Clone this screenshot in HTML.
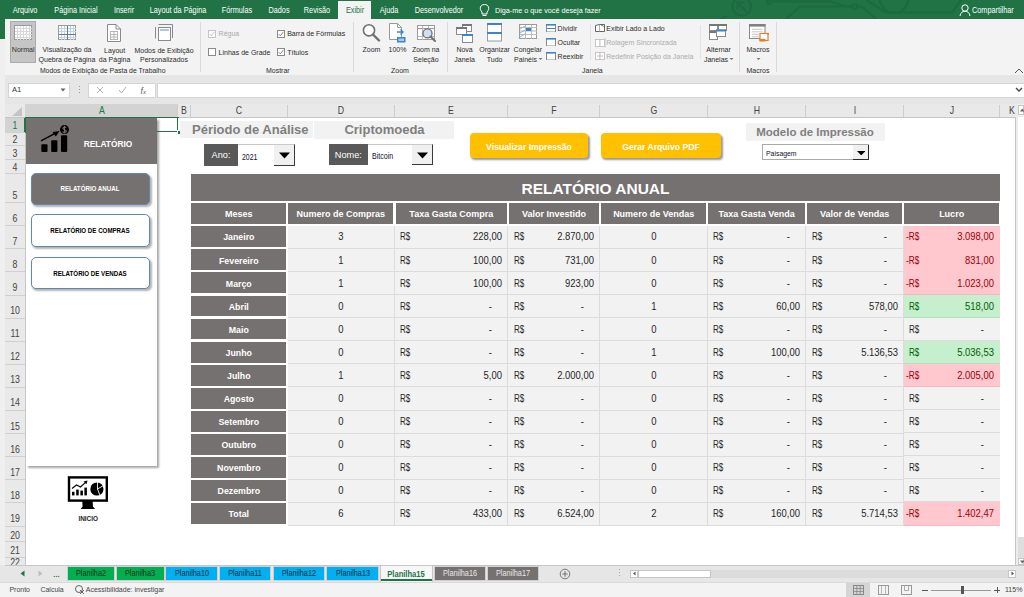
<!DOCTYPE html>
<html><head><meta charset="utf-8"><title>Excel</title>
<style>
html,body{margin:0;padding:0;}
body{width:1024px;height:597px;overflow:hidden;position:relative;background:#fff;font-family:"Liberation Sans", sans-serif;}
div{box-sizing:content-box;}
</style></head><body>
<div style="position:absolute;left:0px;top:0px;width:1024px;height:19px;background:#217346"></div>
<div style="position:absolute;left:0px;top:19px;width:5px;height:20px;background:#217346"></div>
<svg style="position:absolute;left:700px;top:0px" width="300" height="19" viewBox="0 0 300 19"><g stroke="#1d6940" stroke-width="2.2" fill="none" stroke-linecap="round"><circle cx="41.7" cy="6.5" r="9.3"/><path d="M46 11 L37.5 2.5 M37.5 2.5 L37.5 8 M37.5 2.5 L43 2.5"/><path d="M21 19 L26 16.5"/><path d="M70 1.3 L130.4 1.3 L145.6 6.5 L152.5 6.5"/><circle cx="69" cy="1.8" r="2"/><path d="M86 19 L100 6.5 L152.5 6.5"/><circle cx="155" cy="6.5" r="2.3"/><path d="M157.5 6.5 L162 6.5 L176 19"/><path d="M166.7 0 L185.5 12.3 L252 12.3 L261 0"/><path d="M180 -1 A14 14 0 0 0 208 -1"/></g></svg>
<div style="position:absolute;left:338px;top:1px;width:33px;height:18px;background:#f3f3f3"></div>
<div style="position:absolute;left:-174.55px;width:400px;text-align:center;top:5.88px;line-height:9.84px;font-size:8.2px;color:#fff;font-weight:400;white-space:nowrap;transform-origin:center center;transform:scaleX(0.89);">Arquivo</div>
<div style="position:absolute;left:-123.75px;width:400px;text-align:center;top:5.88px;line-height:9.84px;font-size:8.2px;color:#fff;font-weight:400;white-space:nowrap;transform-origin:center center;transform:scaleX(0.89);">Página Inicial</div>
<div style="position:absolute;left:-76.00px;width:400px;text-align:center;top:5.88px;line-height:9.84px;font-size:8.2px;color:#fff;font-weight:400;white-space:nowrap;transform-origin:center center;transform:scaleX(0.89);">Inserir</div>
<div style="position:absolute;left:-22.50px;width:400px;text-align:center;top:5.88px;line-height:9.84px;font-size:8.2px;color:#fff;font-weight:400;white-space:nowrap;transform-origin:center center;transform:scaleX(0.89);">Layout da Página</div>
<div style="position:absolute;left:36.50px;width:400px;text-align:center;top:5.88px;line-height:9.84px;font-size:8.2px;color:#fff;font-weight:400;white-space:nowrap;transform-origin:center center;transform:scaleX(0.89);">Fórmulas</div>
<div style="position:absolute;left:78.50px;width:400px;text-align:center;top:5.88px;line-height:9.84px;font-size:8.2px;color:#fff;font-weight:400;white-space:nowrap;transform-origin:center center;transform:scaleX(0.89);">Dados</div>
<div style="position:absolute;left:116.90px;width:400px;text-align:center;top:5.88px;line-height:9.84px;font-size:8.2px;color:#fff;font-weight:400;white-space:nowrap;transform-origin:center center;transform:scaleX(0.89);">Revisão</div>
<div style="position:absolute;left:189.05px;width:400px;text-align:center;top:5.88px;line-height:9.84px;font-size:8.2px;color:#fff;font-weight:400;white-space:nowrap;transform-origin:center center;transform:scaleX(0.89);">Ajuda</div>
<div style="position:absolute;left:238.95px;width:400px;text-align:center;top:5.88px;line-height:9.84px;font-size:8.2px;color:#fff;font-weight:400;white-space:nowrap;transform-origin:center center;transform:scaleX(0.89);">Desenvolvedor</div>
<div style="position:absolute;left:154.60px;width:400px;text-align:center;top:5.88px;line-height:9.84px;font-size:8.2px;color:#217346;font-weight:400;white-space:nowrap;transform-origin:center center;transform:scaleX(0.89);">Exibir</div>
<svg style="position:absolute;left:479px;top:3px" width="11" height="14" viewBox="0 0 11 14"><g stroke="#fff" stroke-width="1" fill="none"><path d="M3 9 C0 6 1 1.5 5.5 1.5 C10 1.5 11 6 8 9 L8 11 L3 11 Z"/><path d="M3.5 12.5 L7.5 12.5"/></g></svg>
<div style="position:absolute;left:495px;top:5.94px;line-height:9.72px;font-size:8.1px;color:#fff;font-weight:400;white-space:nowrap;transform-origin:left center;transform:scaleX(0.89);">Diga-me o que você deseja fazer</div>
<svg style="position:absolute;left:959px;top:3px" width="12" height="14" viewBox="0 0 12 14"><g stroke="#fff" stroke-width="1" fill="none"><circle cx="6" cy="5" r="3.2"/><path d="M1 13 C1.5 9.5 3.5 8.3 6 8.3 C8.5 8.3 10.5 9.5 11 13"/></g></svg>
<div style="position:absolute;left:972px;top:5.88px;line-height:9.84px;font-size:8.2px;color:#fff;font-weight:400;white-space:nowrap;transform-origin:left center;transform:scaleX(0.89);">Compartilhar</div>
<div style="position:absolute;left:5px;top:19px;width:1019px;height:56px;background:#f3f3f3"></div>
<div style="position:absolute;left:0px;top:39px;width:5px;height:526px;background:#efefef"></div>
<div style="position:absolute;left:10px;top:21px;width:26px;height:42px;background:#c5c5c5;border:1px solid #ababab;box-sizing:border-box"></div>
<svg style="position:absolute;left:14px;top:25px" width="18" height="15" viewBox="0 0 18 15"><rect x="0.5" y="0.5" width="17" height="14" fill="#fff" stroke="#9a9a9a"/><line x1="3.5" y1="1" x2="3.5" y2="15" stroke="#d8d8d8"/><line x1="6.5" y1="1" x2="6.5" y2="15" stroke="#d8d8d8"/><line x1="9.5" y1="1" x2="9.5" y2="15" stroke="#d8d8d8"/><line x1="12.5" y1="1" x2="12.5" y2="15" stroke="#d8d8d8"/><line x1="15.5" y1="1" x2="15.5" y2="15" stroke="#d8d8d8"/><line x1="1" y1="3.5" x2="18" y2="3.5" stroke="#d8d8d8"/><line x1="1" y1="6.5" x2="18" y2="6.5" stroke="#d8d8d8"/><line x1="1" y1="9.5" x2="18" y2="9.5" stroke="#d8d8d8"/><line x1="1" y1="12.5" x2="18" y2="12.5" stroke="#d8d8d8"/></svg>
<div style="position:absolute;left:-176.80px;width:400px;text-align:center;top:46.24px;line-height:8.52px;font-size:7.1px;color:#333;font-weight:400;white-space:nowrap;transform-origin:center center;">Normal</div>
<svg style="position:absolute;left:58px;top:25px" width="18" height="15" viewBox="0 0 18 15"><rect x="0.5" y="0.5" width="17" height="14" fill="#fff" stroke="#9a9a9a"/><line x1="3.5" y1="1" x2="3.5" y2="15" stroke="#bcd3ec"/><line x1="6.5" y1="1" x2="6.5" y2="15" stroke="#bcd3ec"/><line x1="9.5" y1="1" x2="9.5" y2="15" stroke="#bcd3ec"/><line x1="12.5" y1="1" x2="12.5" y2="15" stroke="#bcd3ec"/><line x1="15.5" y1="1" x2="15.5" y2="15" stroke="#bcd3ec"/><line x1="1" y1="3.5" x2="18" y2="3.5" stroke="#bcd3ec"/><line x1="1" y1="6.5" x2="18" y2="6.5" stroke="#bcd3ec"/><line x1="1" y1="9.5" x2="18" y2="9.5" stroke="#bcd3ec"/><line x1="1" y1="12.5" x2="18" y2="12.5" stroke="#bcd3ec"/><line x1="9.5" y1="1" x2="9.5" y2="15" stroke="#777"/><line x1="1" y1="9.5" x2="18" y2="9.5" stroke="#777"/></svg>
<div style="position:absolute;left:-133.00px;width:400px;text-align:center;top:46.30px;line-height:8.40px;font-size:7px;color:#2b2b2b;font-weight:400;white-space:nowrap;transform-origin:center center;">Visualização da</div>
<div style="position:absolute;left:-133.00px;width:400px;text-align:center;top:56.30px;line-height:8.40px;font-size:7px;color:#2b2b2b;font-weight:400;white-space:nowrap;transform-origin:center center;">Quebra de Página</div>
<svg style="position:absolute;left:107px;top:24px" width="14" height="18" viewBox="0 0 14 18"><path d="M0.5 0.5 L9 0.5 L13.5 5 L13.5 17.5 L0.5 17.5 Z" fill="#fff" stroke="#8a8a8a"/><path d="M9 0.5 L9 5 L13.5 5" fill="none" stroke="#8a8a8a"/><g stroke="#b5b5b5"><rect x="3.5" y="7.5" width="7" height="8" fill="none"/><line x1="7" y1="7.5" x2="7" y2="15.5"/><line x1="3.5" y1="10.5" x2="10.5" y2="10.5"/><line x1="3.5" y1="13" x2="10.5" y2="13"/></g></svg>
<div style="position:absolute;left:-85.40px;width:400px;text-align:center;top:46.50px;line-height:8.40px;font-size:7px;color:#2b2b2b;font-weight:400;white-space:nowrap;transform-origin:center center;">Layout</div>
<div style="position:absolute;left:-85.40px;width:400px;text-align:center;top:56.20px;line-height:8.40px;font-size:7px;color:#2b2b2b;font-weight:400;white-space:nowrap;transform-origin:center center;">da Página</div>
<svg style="position:absolute;left:155px;top:24px" width="19" height="17" viewBox="0 0 19 17"><g fill="none" stroke="#8a8a8a"><path d="M3.5 0.5 L17.5 0.5 L17.5 14"/><path d="M0.5 3 L0.5 14.5"/><rect x="3.5" y="3.5" width="12" height="13" fill="#fff"/></g><line x1="5" y1="6" x2="14" y2="6" stroke="#8fb3de" stroke-width="1.5"/></svg>
<div style="position:absolute;left:-36.00px;width:400px;text-align:center;top:46.50px;line-height:8.40px;font-size:7px;color:#2b2b2b;font-weight:400;white-space:nowrap;transform-origin:center center;">Modos de Exibição</div>
<div style="position:absolute;left:-36.00px;width:400px;text-align:center;top:56.20px;line-height:8.40px;font-size:7px;color:#2b2b2b;font-weight:400;white-space:nowrap;transform-origin:center center;">Personalizados</div>
<div style="position:absolute;left:-97.30px;width:400px;text-align:center;top:67.46px;line-height:8.28px;font-size:6.9px;color:#2b2b2b;font-weight:400;white-space:nowrap;transform-origin:center center;">Modos de Exibição de Pasta de Trabalho</div>
<div style="position:absolute;left:200px;top:22px;width:1px;height:50px;background:#dadada"></div>
<svg style="position:absolute;left:208px;top:29.5px" width="8" height="8" viewBox="0 0 8 8"><rect x="0.5" y="0.5" width="7" height="7" fill="#fff" stroke="#c4c4c4"/><path d="M1.6 4 L3.3 5.8 L6.5 1.8" fill="none" stroke="#c4c4c4" stroke-width="1"/></svg>
<div style="position:absolute;left:218.6px;top:30.10px;line-height:8.40px;font-size:7px;color:#a8a8a8;font-weight:400;white-space:nowrap;transform-origin:left center;">Régua</div>
<svg style="position:absolute;left:208px;top:48px" width="8" height="8" viewBox="0 0 8 8"><rect x="0.5" y="0.5" width="7" height="7" fill="#fff" stroke="#8a8a8a"/></svg>
<div style="position:absolute;left:218.6px;top:48.80px;line-height:8.40px;font-size:7px;color:#2b2b2b;font-weight:400;white-space:nowrap;transform-origin:left center;">Linhas de Grade</div>
<svg style="position:absolute;left:276.5px;top:29.5px" width="8" height="8" viewBox="0 0 8 8"><rect x="0.5" y="0.5" width="7" height="7" fill="#fff" stroke="#8a8a8a"/><path d="M1.6 4 L3.3 5.8 L6.5 1.8" fill="none" stroke="#8a8a8a" stroke-width="1"/></svg>
<div style="position:absolute;left:287.2px;top:30.10px;line-height:8.40px;font-size:7px;color:#2b2b2b;font-weight:400;white-space:nowrap;transform-origin:left center;">Barra de Fórmulas</div>
<svg style="position:absolute;left:276.5px;top:48px" width="8" height="8" viewBox="0 0 8 8"><rect x="0.5" y="0.5" width="7" height="7" fill="#fff" stroke="#8a8a8a"/><path d="M1.6 4 L3.3 5.8 L6.5 1.8" fill="none" stroke="#8a8a8a" stroke-width="1"/></svg>
<div style="position:absolute;left:287.2px;top:48.80px;line-height:8.40px;font-size:7px;color:#2b2b2b;font-weight:400;white-space:nowrap;transform-origin:left center;">Títulos</div>
<div style="position:absolute;left:77.80px;width:400px;text-align:center;top:67.10px;line-height:8.40px;font-size:7px;color:#2b2b2b;font-weight:400;white-space:nowrap;transform-origin:center center;">Mostrar</div>
<div style="position:absolute;left:353px;top:22px;width:1px;height:50px;background:#dadada"></div>
<svg style="position:absolute;left:361px;top:23px" width="20" height="19" viewBox="0 0 20 19"><circle cx="8" cy="7.3" r="5.6" fill="#fff" stroke="#707070" stroke-width="1.6"/><line x1="12" y1="11.5" x2="18" y2="17.5" stroke="#707070" stroke-width="2.4" stroke-linecap="round"/></svg>
<div style="position:absolute;left:171.50px;width:400px;text-align:center;top:46.00px;line-height:8.40px;font-size:7px;color:#2b2b2b;font-weight:400;white-space:nowrap;transform-origin:center center;">Zoom</div>
<svg style="position:absolute;left:389px;top:23px" width="18" height="20" viewBox="0 0 18 20"><path d="M0.5 0.5 L8.5 0.5 L12.5 4.5 L12.5 16.5 L0.5 16.5 Z" fill="#fff" stroke="#9a9a9a"/><path d="M8.5 0.5 L8.5 4.5 L12.5 4.5" fill="none" stroke="#9a9a9a"/><path d="M8 9 L14 9 M11.5 6.5 L14 9 L11.5 11.5" fill="none" stroke="#3d85c6" stroke-width="1.4"/><rect x="8" y="14" width="8.5" height="5.5" fill="#3d85c6"/><rect x="9.5" y="15.5" width="5.5" height="2.5" fill="#a9c8ea"/></svg>
<div style="position:absolute;left:197.50px;width:400px;text-align:center;top:46.00px;line-height:8.40px;font-size:7px;color:#2b2b2b;font-weight:400;white-space:nowrap;transform-origin:center center;">100%</div>
<svg style="position:absolute;left:417px;top:25px" width="20" height="18" viewBox="0 0 20 18"><rect x="0.5" y="0.5" width="17" height="14" fill="#fff" stroke="#9a9a9a"/><line x1="1" y1="3.5" x2="17" y2="3.5" stroke="#9a9a9a"/><line x1="1" y1="11.5" x2="17" y2="11.5" stroke="#bbb"/><line x1="5.5" y1="1" x2="5.5" y2="15" stroke="#bbb"/><line x1="11.5" y1="1" x2="11.5" y2="4" stroke="#bbb"/><circle cx="10.5" cy="8.4" r="4.5" fill="#cfe0f3" stroke="#707070" stroke-width="1.3"/><line x1="13.5" y1="11.5" x2="18" y2="16" stroke="#707070" stroke-width="2" stroke-linecap="round"/></svg>
<div style="position:absolute;left:225.70px;width:400px;text-align:center;top:46.00px;line-height:8.40px;font-size:7px;color:#2b2b2b;font-weight:400;white-space:nowrap;transform-origin:center center;">Zoom na</div>
<div style="position:absolute;left:226.00px;width:400px;text-align:center;top:56.10px;line-height:8.40px;font-size:7px;color:#2b2b2b;font-weight:400;white-space:nowrap;transform-origin:center center;">Seleção</div>
<div style="position:absolute;left:200.00px;width:400px;text-align:center;top:67.10px;line-height:8.40px;font-size:7px;color:#2b2b2b;font-weight:400;white-space:nowrap;transform-origin:center center;">Zoom</div>
<div style="position:absolute;left:447px;top:22px;width:1px;height:50px;background:#dadada"></div>
<svg style="position:absolute;left:455px;top:23px" width="20" height="20" viewBox="0 0 20 20"><rect x="7.5" y="1.5" width="9" height="7" fill="#fff" stroke="#8a8a8a"/><rect x="7" y="1" width="10" height="2" fill="#777"/><rect x="1.5" y="4.5" width="10" height="7" fill="#fff" stroke="#8a8a8a"/><rect x="1" y="4" width="11" height="2" fill="#777"/><rect x="7.5" y="11.5" width="10" height="8" fill="#fff" stroke="#8a8a8a"/><rect x="7" y="11" width="11" height="2" fill="#3d85c6"/></svg>
<div style="position:absolute;left:264.60px;width:400px;text-align:center;top:46.20px;line-height:8.40px;font-size:7px;color:#2b2b2b;font-weight:400;white-space:nowrap;transform-origin:center center;">Nova</div>
<div style="position:absolute;left:264.60px;width:400px;text-align:center;top:55.80px;line-height:8.40px;font-size:7px;color:#2b2b2b;font-weight:400;white-space:nowrap;transform-origin:center center;">Janela</div>
<svg style="position:absolute;left:487px;top:23px" width="16" height="19" viewBox="0 0 16 19"><rect x="0.5" y="0.5" width="14" height="17.5" fill="#fff" stroke="#9a9a9a"/><rect x="0" y="0" width="15" height="2" fill="#3d85c6"/><rect x="0" y="9" width="15" height="2" fill="#3d85c6"/></svg>
<div style="position:absolute;left:294.60px;width:400px;text-align:center;top:46.20px;line-height:8.40px;font-size:7px;color:#2b2b2b;font-weight:400;white-space:nowrap;transform-origin:center center;">Organizar</div>
<div style="position:absolute;left:294.60px;width:400px;text-align:center;top:55.80px;line-height:8.40px;font-size:7px;color:#2b2b2b;font-weight:400;white-space:nowrap;transform-origin:center center;">Tudo</div>
<svg style="position:absolute;left:519px;top:24px" width="18" height="16" viewBox="0 0 18 16"><rect x="0.5" y="0.5" width="17" height="14" fill="#fff" stroke="#9a9a9a"/><line x1="6.5" y1="1" x2="6.5" y2="15" stroke="#bbb"/><line x1="12.5" y1="1" x2="12.5" y2="15" stroke="#bbb"/><line x1="1" y1="3.5" x2="18" y2="3.5" stroke="#bbb"/><line x1="1" y1="7" x2="18" y2="7" stroke="#bbb"/><line x1="1" y1="10.5" x2="18" y2="10.5" stroke="#bbb"/><rect x="7" y="4" width="5" height="3" fill="#3d85c6"/><path d="M1 5 L6 2 M1 9 L6 6 M1 13 L6 10" stroke="#8fb3de"/></svg>
<div style="position:absolute;left:327.80px;width:400px;text-align:center;top:46.20px;line-height:8.40px;font-size:7px;color:#2b2b2b;font-weight:400;white-space:nowrap;transform-origin:center center;">Congelar</div>
<div style="position:absolute;left:325.50px;width:400px;text-align:center;top:55.80px;line-height:8.40px;font-size:7px;color:#2b2b2b;font-weight:400;white-space:nowrap;transform-origin:center center;">Painéis</div>
<svg style="position:absolute;left:538px;top:57px" width="5" height="4" viewBox="0 0 5 4"><path d="M0.5 1 L4.5 1 L2.5 3 Z" fill="#777"/></svg>
<svg style="position:absolute;left:546px;top:24.2px" width="10" height="8" viewBox="0 0 10 8"><rect x="0.5" y="0.5" width="9" height="7.5" fill="#fff" stroke="#8a8a8a"/><rect x="0" y="0" width="10" height="1.6" fill="#3d85c6"/><line x1="1" y1="4.5" x2="9" y2="4.5" stroke="#3d85c6"/></svg>
<div style="position:absolute;left:557.6px;top:25.10px;line-height:8.40px;font-size:7px;color:#2b2b2b;font-weight:400;white-space:nowrap;transform-origin:left center;">Dividir</div>
<svg style="position:absolute;left:546px;top:37.8px" width="10" height="8" viewBox="0 0 10 8"><rect x="0.5" y="0.5" width="9" height="7.5" fill="#fff" stroke="#8a8a8a"/><rect x="0" y="0" width="10" height="1.6" fill="#3d85c6"/></svg>
<div style="position:absolute;left:557.6px;top:38.70px;line-height:8.40px;font-size:7px;color:#2b2b2b;font-weight:400;white-space:nowrap;transform-origin:left center;">Ocultar</div>
<svg style="position:absolute;left:546px;top:52.2px" width="10" height="8" viewBox="0 0 10 8"><rect x="0.5" y="0.5" width="9" height="7.5" fill="#fff" stroke="#8a8a8a"/><rect x="0" y="0" width="10" height="1.6" fill="#3d85c6"/></svg>
<div style="position:absolute;left:557.6px;top:53.10px;line-height:8.40px;font-size:7px;color:#2b2b2b;font-weight:400;white-space:nowrap;transform-origin:left center;">Reexibir</div>
<svg style="position:absolute;left:595px;top:24px" width="10" height="8" viewBox="0 0 10 8"><g fill="#fff" stroke="#555" stroke-width="0.9"><path d="M0.5 1.5 L4.5 0.5 L4.5 7.5 L0.5 7.5 Z"/><path d="M4.5 0.5 L9.5 0.5 L9.5 7.5 L4.5 7.5"/><path d="M6 1.5 L8 1.5 L8.5 3" stroke="#888"/></g></svg>
<div style="position:absolute;left:606.3px;top:25.00px;line-height:8.40px;font-size:7px;color:#2b2b2b;font-weight:400;white-space:nowrap;transform-origin:left center;">Exibir Lado a Lado</div>
<svg style="position:absolute;left:595px;top:38px" width="11" height="10" viewBox="0 0 11 10"><g fill="#fff" stroke="#c0c0c0" stroke-width="0.9"><rect x="0.5" y="1.5" width="4.5" height="7"/><rect x="5" y="1.5" width="4.5" height="7"/><path d="M10 0 L10 9.5"/></g></svg>
<div style="position:absolute;left:606.3px;top:39.20px;line-height:8.40px;font-size:7px;color:#ababab;font-weight:400;white-space:nowrap;transform-origin:left center;">Rolagem Sincronizada</div>
<svg style="position:absolute;left:595px;top:52px" width="11" height="9" viewBox="0 0 11 9"><g fill="#fff" stroke="#c0c0c0" stroke-width="0.9"><rect x="0.5" y="0.5" width="4.5" height="7"/><rect x="5" y="0.5" width="4.5" height="7"/><path d="M2 4 L8 4" stroke="#d0b0b0"/></g></svg>
<div style="position:absolute;left:606.3px;top:53.10px;line-height:8.40px;font-size:7px;color:#ababab;font-weight:400;white-space:nowrap;transform-origin:left center;">Redefinir Posição da Janela</div>
<div style="position:absolute;left:590px;top:24px;width:1px;height:36px;background:#e2e2e2"></div>
<div style="position:absolute;left:700px;top:25px;width:1px;height:34px;background:#e2e2e2"></div>
<svg style="position:absolute;left:709px;top:24px" width="19" height="16" viewBox="0 0 19 16"><rect x="0.5" y="0.5" width="8" height="6" fill="#fff" stroke="#8a8a8a"/><rect x="0" y="0" width="9" height="2" fill="#777"/><rect x="9.5" y="0.5" width="8" height="6" fill="#fff" stroke="#8a8a8a"/><rect x="9" y="0" width="9" height="2" fill="#777"/><rect x="0.5" y="7.5" width="8" height="8" fill="#fff" stroke="#8a8a8a"/><rect x="0" y="7" width="9" height="2" fill="#777"/><rect x="7.5" y="6.0" width="9" height="6.5" fill="#fff" stroke="#8a8a8a"/><rect x="7" y="5.5" width="10" height="2" fill="#3d85c6"/></svg>
<div style="position:absolute;left:518.60px;width:400px;text-align:center;top:46.00px;line-height:8.40px;font-size:7px;color:#2b2b2b;font-weight:400;white-space:nowrap;transform-origin:center center;">Alternar</div>
<div style="position:absolute;left:516.00px;width:400px;text-align:center;top:56.10px;line-height:8.40px;font-size:7px;color:#2b2b2b;font-weight:400;white-space:nowrap;transform-origin:center center;">Janelas</div>
<svg style="position:absolute;left:729px;top:57px" width="5" height="4" viewBox="0 0 5 4"><path d="M0.5 1 L4.5 1 L2.5 3 Z" fill="#777"/></svg>
<div style="position:absolute;left:392.40px;width:400px;text-align:center;top:67.10px;line-height:8.40px;font-size:7px;color:#2b2b2b;font-weight:400;white-space:nowrap;transform-origin:center center;">Janela</div>
<div style="position:absolute;left:739px;top:22px;width:1px;height:50px;background:#dadada"></div>
<svg style="position:absolute;left:748.5px;top:24px" width="21" height="18" viewBox="0 0 21 18"><rect x="0.5" y="0.5" width="15.5" height="14" fill="#fff" stroke="#8a8a8a"/><rect x="0" y="0" width="16.5" height="2.6" fill="#808080"/><g stroke="#c0c0c0" stroke-width="0.9"><line x1="3" y1="5.3" x2="13.5" y2="5.3"/><line x1="3" y1="7.8" x2="13.5" y2="7.8"/><line x1="3" y1="10.3" x2="10" y2="10.3"/><line x1="3" y1="12.8" x2="10" y2="12.8"/></g><path d="M11 9.5 L19 9.5 L19 16.5 L11 16.5 Z" fill="#fff" stroke="#e67e22" stroke-width="1.2"/><rect x="10.5" y="15" width="6" height="2.5" fill="#e67e22"/><circle cx="19" cy="9.7" r="1" fill="#e67e22"/></svg>
<div style="position:absolute;left:558.00px;width:400px;text-align:center;top:46.00px;line-height:8.40px;font-size:7px;color:#2b2b2b;font-weight:400;white-space:nowrap;transform-origin:center center;">Macros</div>
<svg style="position:absolute;left:756px;top:57px" width="5" height="4" viewBox="0 0 5 4"><path d="M0.5 1 L4.5 1 L2.5 3 Z" fill="#777"/></svg>
<div style="position:absolute;left:558.00px;width:400px;text-align:center;top:67.10px;line-height:8.40px;font-size:7px;color:#2b2b2b;font-weight:400;white-space:nowrap;transform-origin:center center;">Macros</div>
<div style="position:absolute;left:776px;top:22px;width:1px;height:50px;background:#dadada"></div>
<svg style="position:absolute;left:1014px;top:68px" width="10" height="6" viewBox="0 0 10 6"><path d="M1 5 L5 1 L9 5" fill="none" stroke="#555" stroke-width="1"/></svg>
<div style="position:absolute;left:5px;top:75px;width:1019px;height:29px;background:#e6e6e6"></div>
<div style="position:absolute;left:8px;top:82.5px;width:62px;height:15px;background:#fff;border:1px solid #d4d4d4;box-sizing:border-box"></div>
<div style="position:absolute;left:12px;top:85.40px;line-height:9.60px;font-size:8px;color:#333;font-weight:400;white-space:nowrap;transform-origin:left center;transform:scaleX(0.95);">A1</div>
<svg style="position:absolute;left:60px;top:88px" width="6" height="4" viewBox="0 0 6 4"><path d="M0.5 0.5 L5.5 0.5 L3 3.5 Z" fill="#666"/></svg>
<svg style="position:absolute;left:78px;top:86px" width="3" height="9" viewBox="0 0 3 9"><g fill="#999"><rect x="1" y="0" width="1" height="1"/><rect x="1" y="3" width="1" height="1"/><rect x="1" y="6" width="1" height="1"/></g></svg>
<div style="position:absolute;left:88px;top:82.5px;width:67.5px;height:15px;background:#fff;border:1px solid #d4d4d4;box-sizing:border-box"></div>
<svg style="position:absolute;left:96px;top:86px" width="8" height="8" viewBox="0 0 8 8"><path d="M1 1 L7 7 M7 1 L1 7" stroke="#b0b0b0" stroke-width="1"/></svg>
<svg style="position:absolute;left:118px;top:86px" width="9" height="8" viewBox="0 0 9 8"><path d="M1 4 L3.5 7 L8 1" fill="none" stroke="#b0b0b0" stroke-width="1"/></svg>
<div style="position:absolute;left:140.5px;top:85.90px;line-height:10.20px;font-size:8.5px;color:#555;font-weight:400;white-space:nowrap;transform-origin:left center;"><i>f</i><span style='font-size:6px'><i>x</i></span></div>
<div style="position:absolute;left:157px;top:82.5px;width:867px;height:15px;background:#fff;border:1px solid #d4d4d4;border-right:none;box-sizing:border-box"></div>
<svg style="position:absolute;left:1015px;top:87px" width="8" height="6" viewBox="0 0 8 6"><path d="M1 1 L4 4 L7 1" fill="none" stroke="#444" stroke-width="1.3"/></svg>
<div style="position:absolute;left:5px;top:104px;width:1010px;height:13.5px;background:#e9e9e9"></div>
<div style="position:absolute;left:5px;top:117px;width:20px;height:448px;background:#e9e9e9"></div>
<svg style="position:absolute;left:12px;top:107px" width="11" height="9" viewBox="0 0 11 9"><path d="M10 0 L10 9 L0 9 Z" fill="#c4c4c4"/></svg>
<div style="position:absolute;left:25px;top:104px;width:153px;height:13px;background:#d3d3d3"></div>
<div style="position:absolute;left:-98.50px;width:400px;text-align:center;top:104.92px;line-height:12.36px;font-size:10.3px;color:#217346;font-weight:400;white-space:nowrap;transform-origin:center center;transform:scaleX(0.85);">A</div>
<div style="position:absolute;left:177.3px;top:105px;width:1px;height:12px;background:#cdcdcd"></div>
<div style="position:absolute;left:-15.75px;width:400px;text-align:center;top:104.92px;line-height:12.36px;font-size:10.3px;color:#444;font-weight:400;white-space:nowrap;transform-origin:center center;transform:scaleX(0.85);">B</div>
<div style="position:absolute;left:189.8px;top:105px;width:1px;height:12px;background:#cdcdcd"></div>
<div style="position:absolute;left:38.85px;width:400px;text-align:center;top:104.92px;line-height:12.36px;font-size:10.3px;color:#444;font-weight:400;white-space:nowrap;transform-origin:center center;transform:scaleX(0.85);">C</div>
<div style="position:absolute;left:286.5px;top:105px;width:1px;height:12px;background:#cdcdcd"></div>
<div style="position:absolute;left:140.85px;width:400px;text-align:center;top:104.92px;line-height:12.36px;font-size:10.3px;color:#444;font-weight:400;white-space:nowrap;transform-origin:center center;transform:scaleX(0.85);">D</div>
<div style="position:absolute;left:393.8px;top:105px;width:1px;height:12px;background:#cdcdcd"></div>
<div style="position:absolute;left:251.25px;width:400px;text-align:center;top:104.92px;line-height:12.36px;font-size:10.3px;color:#444;font-weight:400;white-space:nowrap;transform-origin:center center;transform:scaleX(0.85);">E</div>
<div style="position:absolute;left:507.3px;top:105px;width:1px;height:12px;background:#cdcdcd"></div>
<div style="position:absolute;left:354.00px;width:400px;text-align:center;top:104.92px;line-height:12.36px;font-size:10.3px;color:#444;font-weight:400;white-space:nowrap;transform-origin:center center;transform:scaleX(0.85);">F</div>
<div style="position:absolute;left:599.3px;top:105px;width:1px;height:12px;background:#cdcdcd"></div>
<div style="position:absolute;left:453.65px;width:400px;text-align:center;top:104.92px;line-height:12.36px;font-size:10.3px;color:#444;font-weight:400;white-space:nowrap;transform-origin:center center;transform:scaleX(0.85);">G</div>
<div style="position:absolute;left:706.5999999999999px;top:105px;width:1px;height:12px;background:#cdcdcd"></div>
<div style="position:absolute;left:556.65px;width:400px;text-align:center;top:104.92px;line-height:12.36px;font-size:10.3px;color:#444;font-weight:400;white-space:nowrap;transform-origin:center center;transform:scaleX(0.85);">H</div>
<div style="position:absolute;left:805.3px;top:105px;width:1px;height:12px;background:#cdcdcd"></div>
<div style="position:absolute;left:654.65px;width:400px;text-align:center;top:104.92px;line-height:12.36px;font-size:10.3px;color:#444;font-weight:400;white-space:nowrap;transform-origin:center center;transform:scaleX(0.85);">I</div>
<div style="position:absolute;left:902.5999999999999px;top:105px;width:1px;height:12px;background:#cdcdcd"></div>
<div style="position:absolute;left:751.65px;width:400px;text-align:center;top:104.92px;line-height:12.36px;font-size:10.3px;color:#444;font-weight:400;white-space:nowrap;transform-origin:center center;transform:scaleX(0.85);">J</div>
<div style="position:absolute;left:999.3px;top:105px;width:1px;height:12px;background:#cdcdcd"></div>
<div style="position:absolute;left:811.50px;width:400px;text-align:center;top:104.92px;line-height:12.36px;font-size:10.3px;color:#444;font-weight:400;white-space:nowrap;transform-origin:center center;transform:scaleX(0.85);">K</div>
<div style="position:absolute;left:5px;top:117px;width:1010px;height:0.8px;background:#c6c6c6"></div>
<div style="position:absolute;left:5px;top:117.5px;width:20px;height:14.5px;background:#d3d3d3"></div>
<div style="position:absolute;left:24px;top:117.5px;width:1.5px;height:14.5px;background:#217346"></div>
<div style="position:absolute;left:5px;top:131.6px;width:20px;height:0.8px;background:#d0d0d0"></div>
<div style="position:absolute;left:-185.20px;width:400px;text-align:center;top:120.12px;line-height:12.36px;font-size:10.3px;color:#217346;font-weight:400;white-space:nowrap;transform-origin:center center;transform:scaleX(0.85);">1</div>
<div style="position:absolute;left:5px;top:145.4px;width:20px;height:0.8px;background:#d0d0d0"></div>
<div style="position:absolute;left:-185.20px;width:400px;text-align:center;top:133.92px;line-height:12.36px;font-size:10.3px;color:#444;font-weight:400;white-space:nowrap;transform-origin:center center;transform:scaleX(0.85);">2</div>
<div style="position:absolute;left:5px;top:159.3px;width:20px;height:0.8px;background:#d0d0d0"></div>
<div style="position:absolute;left:-185.20px;width:400px;text-align:center;top:147.82px;line-height:12.36px;font-size:10.3px;color:#444;font-weight:400;white-space:nowrap;transform-origin:center center;transform:scaleX(0.85);">3</div>
<div style="position:absolute;left:5px;top:173.2px;width:20px;height:0.8px;background:#d0d0d0"></div>
<div style="position:absolute;left:-185.20px;width:400px;text-align:center;top:161.72px;line-height:12.36px;font-size:10.3px;color:#444;font-weight:400;white-space:nowrap;transform-origin:center center;transform:scaleX(0.85);">4</div>
<div style="position:absolute;left:5px;top:202px;width:20px;height:0.8px;background:#d0d0d0"></div>
<div style="position:absolute;left:-185.20px;width:400px;text-align:center;top:189.62px;line-height:12.36px;font-size:10.3px;color:#444;font-weight:400;white-space:nowrap;transform-origin:center center;transform:scaleX(0.85);">5</div>
<div style="position:absolute;left:5px;top:225.3px;width:20px;height:0.8px;background:#d0d0d0"></div>
<div style="position:absolute;left:-185.20px;width:400px;text-align:center;top:212.92px;line-height:12.36px;font-size:10.3px;color:#444;font-weight:400;white-space:nowrap;transform-origin:center center;transform:scaleX(0.85);">6</div>
<div style="position:absolute;left:5px;top:248.37px;width:20px;height:0.8px;background:#d0d0d0"></div>
<div style="position:absolute;left:-185.20px;width:400px;text-align:center;top:235.99px;line-height:12.36px;font-size:10.3px;color:#444;font-weight:400;white-space:nowrap;transform-origin:center center;transform:scaleX(0.85);">7</div>
<div style="position:absolute;left:5px;top:271.44px;width:20px;height:0.8px;background:#d0d0d0"></div>
<div style="position:absolute;left:-185.20px;width:400px;text-align:center;top:259.06px;line-height:12.36px;font-size:10.3px;color:#444;font-weight:400;white-space:nowrap;transform-origin:center center;transform:scaleX(0.85);">8</div>
<div style="position:absolute;left:5px;top:294.51px;width:20px;height:0.8px;background:#d0d0d0"></div>
<div style="position:absolute;left:-185.20px;width:400px;text-align:center;top:282.13px;line-height:12.36px;font-size:10.3px;color:#444;font-weight:400;white-space:nowrap;transform-origin:center center;transform:scaleX(0.85);">9</div>
<div style="position:absolute;left:5px;top:317.58000000000004px;width:20px;height:0.8px;background:#d0d0d0"></div>
<div style="position:absolute;left:-185.20px;width:400px;text-align:center;top:305.20px;line-height:12.36px;font-size:10.3px;color:#444;font-weight:400;white-space:nowrap;transform-origin:center center;transform:scaleX(0.85);">10</div>
<div style="position:absolute;left:5px;top:340.65px;width:20px;height:0.8px;background:#d0d0d0"></div>
<div style="position:absolute;left:-185.20px;width:400px;text-align:center;top:328.27px;line-height:12.36px;font-size:10.3px;color:#444;font-weight:400;white-space:nowrap;transform-origin:center center;transform:scaleX(0.85);">11</div>
<div style="position:absolute;left:5px;top:363.72px;width:20px;height:0.8px;background:#d0d0d0"></div>
<div style="position:absolute;left:-185.20px;width:400px;text-align:center;top:351.34px;line-height:12.36px;font-size:10.3px;color:#444;font-weight:400;white-space:nowrap;transform-origin:center center;transform:scaleX(0.85);">12</div>
<div style="position:absolute;left:5px;top:386.79px;width:20px;height:0.8px;background:#d0d0d0"></div>
<div style="position:absolute;left:-185.20px;width:400px;text-align:center;top:374.41px;line-height:12.36px;font-size:10.3px;color:#444;font-weight:400;white-space:nowrap;transform-origin:center center;transform:scaleX(0.85);">13</div>
<div style="position:absolute;left:5px;top:409.86px;width:20px;height:0.8px;background:#d0d0d0"></div>
<div style="position:absolute;left:-185.20px;width:400px;text-align:center;top:397.48px;line-height:12.36px;font-size:10.3px;color:#444;font-weight:400;white-space:nowrap;transform-origin:center center;transform:scaleX(0.85);">14</div>
<div style="position:absolute;left:5px;top:432.93px;width:20px;height:0.8px;background:#d0d0d0"></div>
<div style="position:absolute;left:-185.20px;width:400px;text-align:center;top:420.55px;line-height:12.36px;font-size:10.3px;color:#444;font-weight:400;white-space:nowrap;transform-origin:center center;transform:scaleX(0.85);">15</div>
<div style="position:absolute;left:5px;top:456.0px;width:20px;height:0.8px;background:#d0d0d0"></div>
<div style="position:absolute;left:-185.20px;width:400px;text-align:center;top:443.62px;line-height:12.36px;font-size:10.3px;color:#444;font-weight:400;white-space:nowrap;transform-origin:center center;transform:scaleX(0.85);">16</div>
<div style="position:absolute;left:5px;top:479.07000000000005px;width:20px;height:0.8px;background:#d0d0d0"></div>
<div style="position:absolute;left:-185.20px;width:400px;text-align:center;top:466.69px;line-height:12.36px;font-size:10.3px;color:#444;font-weight:400;white-space:nowrap;transform-origin:center center;transform:scaleX(0.85);">17</div>
<div style="position:absolute;left:5px;top:502.14000000000004px;width:20px;height:0.8px;background:#d0d0d0"></div>
<div style="position:absolute;left:-185.20px;width:400px;text-align:center;top:489.76px;line-height:12.36px;font-size:10.3px;color:#444;font-weight:400;white-space:nowrap;transform-origin:center center;transform:scaleX(0.85);">18</div>
<div style="position:absolute;left:5px;top:525.5px;width:20px;height:0.8px;background:#d0d0d0"></div>
<div style="position:absolute;left:-185.20px;width:400px;text-align:center;top:513.12px;line-height:12.36px;font-size:10.3px;color:#444;font-weight:400;white-space:nowrap;transform-origin:center center;transform:scaleX(0.85);">19</div>
<div style="position:absolute;left:5px;top:541px;width:20px;height:0.8px;background:#d0d0d0"></div>
<div style="position:absolute;left:-185.20px;width:400px;text-align:center;top:529.52px;line-height:12.36px;font-size:10.3px;color:#444;font-weight:400;white-space:nowrap;transform-origin:center center;transform:scaleX(0.85);">20</div>
<div style="position:absolute;left:5px;top:556.5px;width:20px;height:0.8px;background:#d0d0d0"></div>
<div style="position:absolute;left:-185.20px;width:400px;text-align:center;top:545.02px;line-height:12.36px;font-size:10.3px;color:#444;font-weight:400;white-space:nowrap;transform-origin:center center;transform:scaleX(0.85);">21</div>
<div style="position:absolute;left:5px;top:568px;width:20px;height:0.8px;background:#d0d0d0"></div>
<div style="position:absolute;left:-185.20px;width:400px;text-align:center;top:556.52px;line-height:12.36px;font-size:10.3px;color:#444;font-weight:400;white-space:nowrap;transform-origin:center center;transform:scaleX(0.85);">22</div>
<div style="position:absolute;left:24.5px;top:117px;width:0.8px;height:448px;background:#c6c6c6"></div>
<div style="position:absolute;left:25.5px;top:117.8px;width:989.5px;height:447.5px;background:#fff"></div>
<div style="position:absolute;left:1015px;top:104px;width:3px;height:461px;background:#ececec"></div>
<div style="position:absolute;left:1015px;top:117px;width:1.2px;height:448px;background:#c6c6c6"></div>
<div style="position:absolute;left:1018px;top:104px;width:6px;height:461px;background:#f0f0f0"></div>
<div style="position:absolute;left:1018px;top:117px;width:6px;height:420px;background:#fff"></div>
<div style="position:absolute;left:1018px;top:537px;width:6px;height:21px;background:#dedede"></div>
<div style="position:absolute;left:1018px;top:105px;width:6px;height:10px;background:#fff;border:1px solid #c6c6c6;box-sizing:border-box"></div>
<div style="position:absolute;left:1018px;top:558px;width:6px;height:7px;background:#fff;border:1px solid #c6c6c6;box-sizing:border-box"></div>
<svg style="position:absolute;left:1019.5px;top:108px" width="5" height="4" viewBox="0 0 5 4"><path d="M0 3.5 L4.5 3.5 L2.25 0.5 Z" fill="#666"/></svg>
<svg style="position:absolute;left:1019.5px;top:560px" width="5" height="4" viewBox="0 0 5 4"><path d="M0 0.5 L4.5 0.5 L2.25 3.5 Z" fill="#666"/></svg>
<div style="position:absolute;left:25.5px;top:117.5px;width:131.5px;height:348.3px;background:#fff;box-shadow:1.5px 1.5px 2px rgba(0,0,0,0.35)"></div>
<div style="position:absolute;left:25.5px;top:117.5px;width:131.5px;height:46px;background:#767171"></div>
<svg style="position:absolute;left:38px;top:122px" width="32" height="32" viewBox="0 0 32 32"><g fill="#000"><rect x="3.3" y="22.2" width="6.2" height="7.8" rx="1"/><rect x="13.2" y="18.2" width="6.2" height="11.8" rx="1"/><rect x="23" y="13.2" width="6.2" height="16.8" rx="1"/><circle cx="26.5" cy="7.6" r="4.5"/></g><path d="M28.3 5.6 C27.6 4.7 25 4.6 24.8 6.2 C24.6 7.8 28.4 7.3 28.3 9.1 C28.2 10.7 25.4 10.6 24.6 9.6 M26.5 3.8 L26.5 11.4" fill="none" stroke="#767171" stroke-width="1.1"/><path d="M3 18.9 L17.5 11.2" stroke="#000" stroke-width="1.5"/><path d="M21.5 9 L14.5 10 L17.8 14.6 Z" fill="#000"/></svg>
<div style="position:absolute;left:-91.80px;width:400px;text-align:center;top:138.30px;line-height:11.40px;font-size:9.5px;color:#fff;font-weight:700;white-space:nowrap;transform-origin:center center;transform:scaleX(0.88);">RELATÓRIO</div>
<div style="position:absolute;left:24.5px;top:117px;width:154.5px;height:1.4px;background:#217346"></div>
<div style="position:absolute;left:24.5px;top:117px;width:1.6px;height:15.5px;background:#217346"></div>
<div style="position:absolute;left:176.8px;top:117px;width:1.6px;height:15px;background:#217346"></div>
<div style="position:absolute;left:157px;top:131px;width:21px;height:1.4px;background:#217346"></div>
<div style="position:absolute;left:176.6px;top:130.3px;width:3px;height:3px;background:#217346;border:0.7px solid #fff;box-sizing:content-box"></div>
<div style="position:absolute;left:30.6px;top:172.9px;width:119.6px;height:31.8px;background:#767171;border:1.8px solid #6088b4;border-radius:5px;box-sizing:border-box;box-shadow:1.5px 2px 2px rgba(0,0,0,0.3)"></div>
<div style="position:absolute;left:-109.60px;width:400px;text-align:center;top:185.20px;line-height:8.40px;font-size:7px;color:#fff;font-weight:700;white-space:nowrap;transform-origin:center center;transform:scaleX(0.88);">RELATÓRIO ANUAL</div>
<div style="position:absolute;left:30.6px;top:214.4px;width:119.6px;height:32.4px;background:#fff;border:1.8px solid #6088b4;border-radius:5px;box-sizing:border-box;box-shadow:1.5px 2px 2px rgba(0,0,0,0.3)"></div>
<div style="position:absolute;left:-109.60px;width:400px;text-align:center;top:227.00px;line-height:8.40px;font-size:7px;color:#000;font-weight:700;white-space:nowrap;transform-origin:center center;transform:scaleX(0.88);">RELATÓRIO DE COMPRAS</div>
<div style="position:absolute;left:30.6px;top:256.7px;width:119.6px;height:32.8px;background:#fff;border:1.8px solid #6088b4;border-radius:5px;box-sizing:border-box;box-shadow:1.5px 2px 2px rgba(0,0,0,0.3)"></div>
<div style="position:absolute;left:-109.60px;width:400px;text-align:center;top:269.50px;line-height:8.40px;font-size:7px;color:#000;font-weight:700;white-space:nowrap;transform-origin:center center;transform:scaleX(0.88);">RELATÓRIO DE VENDAS</div>
<svg style="position:absolute;left:67px;top:475px" width="42" height="36" viewBox="0 0 42 36"><rect x="2" y="2.4" width="37.8" height="23.2" fill="#fff" stroke="#000" stroke-width="2.4"/><path d="M15.2 26 L25.6 26 L26 31.5 L28 34 L13.6 34 L15.6 31.5 Z" fill="#000"/><g fill="#000"><rect x="5" y="16.8" width="2.5" height="3.6"/><rect x="9.2" y="14.6" width="2.5" height="5.8"/><rect x="13.4" y="15.6" width="2.5" height="4.8"/><rect x="17.4" y="12.6" width="2.5" height="7.8"/></g><path d="M5 13.5 L9.5 10 L13.5 12 L18.5 7.3" fill="none" stroke="#000" stroke-width="1.1"/><path d="M16.5 6.6 L20.5 5.4 L19.5 9.2 Z" fill="#000"/><circle cx="29.9" cy="14" r="6.6" fill="#000"/><path d="M30.5 14 L30.5 7 M30.5 14 L36.5 10.5 M30.5 14 L33 20.5" stroke="#fff" stroke-width="0.9"/></svg>
<div style="position:absolute;left:-111.80px;width:400px;text-align:center;top:515.26px;line-height:7.68px;font-size:6.4px;color:#222;font-weight:700;white-space:nowrap;transform-origin:center center;">INICIO</div>
<div style="position:absolute;left:180px;top:121px;width:132.6px;height:17px;background:#f2f2f2"></div>
<div style="position:absolute;left:50.30px;width:400px;text-align:center;top:121.70px;line-height:15.60px;font-size:13px;color:#7f7f7f;font-weight:700;white-space:nowrap;transform-origin:center center;">Périodo de Análise</div>
<div style="position:absolute;left:314.4px;top:121px;width:140px;height:17.5px;background:#f2f2f2"></div>
<div style="position:absolute;left:184.50px;width:400px;text-align:center;top:121.90px;line-height:15.60px;font-size:13px;color:#7f7f7f;font-weight:700;white-space:nowrap;transform-origin:center center;">Criptomoeda</div>
<div style="position:absolute;left:204px;top:144px;width:34px;height:22px;background:#595959"></div>
<div style="position:absolute;left:21.00px;width:400px;text-align:center;top:150.08px;line-height:11.04px;font-size:9.2px;color:#fff;font-weight:400;white-space:nowrap;transform-origin:center center;">Ano:</div>
<div style="position:absolute;left:238px;top:144px;width:36px;height:22px;background:#fff;border-top:1px solid #c9c9c9"></div>
<div style="position:absolute;left:241.5px;top:151.74px;line-height:10.32px;font-size:8.6px;color:#101030;font-weight:400;white-space:nowrap;transform-origin:left center;transform:scaleX(0.8);">2021</div>
<div style="position:absolute;left:274px;top:144px;width:20.5px;height:22px;background:#f0f0f0;border-right:1.5px solid #3a3a3a;border-bottom:1.5px solid #3a3a3a;border-top:1px solid #c9c9c9;box-sizing:border-box"></div>
<svg style="position:absolute;left:279px;top:152.0px" width="11" height="7" viewBox="0 0 11 7"><path d="M0 0.5 L11 0.5 L5.5 6.5 Z" fill="#000"/></svg>
<div style="position:absolute;left:328.7px;top:144px;width:39.3px;height:21.19999999999999px;background:#595959"></div>
<div style="position:absolute;left:148.35px;width:400px;text-align:center;top:149.68px;line-height:11.04px;font-size:9.2px;color:#fff;font-weight:400;white-space:nowrap;transform-origin:center center;">Nome:</div>
<div style="position:absolute;left:368px;top:144px;width:44px;height:21.19999999999999px;background:#fff;border-top:1px solid #c9c9c9"></div>
<div style="position:absolute;left:371.5px;top:151.22px;line-height:10.56px;font-size:8.8px;color:#101030;font-weight:400;white-space:nowrap;transform-origin:left center;transform:scaleX(0.8);">Bitcoin</div>
<div style="position:absolute;left:412px;top:144px;width:20.5px;height:21.19999999999999px;background:#f0f0f0;border-right:1.5px solid #3a3a3a;border-bottom:1.5px solid #3a3a3a;border-top:1px solid #c9c9c9;box-sizing:border-box"></div>
<svg style="position:absolute;left:417px;top:151.6px" width="11" height="7" viewBox="0 0 11 7"><path d="M0 0.5 L11 0.5 L5.5 6.5 Z" fill="#000"/></svg>
<div style="position:absolute;left:469.6px;top:132.9px;width:118.10000000000002px;height:25.6px;background:#ffc000;border-radius:4px;box-shadow:1.5px 2px 2px rgba(0,0,0,0.4)"></div>
<div style="position:absolute;left:328.65px;width:400px;text-align:center;top:140.54px;line-height:11.52px;font-size:9.6px;color:#fff;font-weight:700;white-space:nowrap;transform-origin:center center;transform:scaleX(0.9);">Visualizar Impressão</div>
<div style="position:absolute;left:601.4px;top:132.9px;width:119.70000000000005px;height:25.6px;background:#ffc000;border-radius:4px;box-shadow:1.5px 2px 2px rgba(0,0,0,0.4)"></div>
<div style="position:absolute;left:461.25px;width:400px;text-align:center;top:140.54px;line-height:11.52px;font-size:9.6px;color:#fff;font-weight:700;white-space:nowrap;transform-origin:center center;transform:scaleX(0.9);">Gerar Arquivo PDF</div>
<div style="position:absolute;left:745.5px;top:122.8px;width:139.5px;height:17.8px;background:#f2f2f2"></div>
<div style="position:absolute;left:615.00px;width:400px;text-align:center;top:126.00px;line-height:13.80px;font-size:11.5px;color:#7f7f7f;font-weight:700;white-space:nowrap;transform-origin:center center;">Modelo de Impressão</div>
<div style="position:absolute;left:762px;top:144.3px;width:106.7px;height:16.2px;background:#fff;border:1px solid #a9a9a9;box-sizing:border-box"></div>
<div style="position:absolute;left:853.4px;top:144.8px;width:15.2px;height:15.4px;background:#f0f0f0;border-right:1.5px solid #2a2a2a;border-bottom:1.5px solid #2a2a2a;box-sizing:border-box"></div>
<svg style="position:absolute;left:856.8px;top:150.8px" width="8.4" height="4.5" viewBox="0 0 8.4 4.5"><path d="M0 0 L8.4 0 L4.2 4.4 Z" fill="#000"/></svg>
<div style="position:absolute;left:765.6px;top:148.60px;line-height:9.60px;font-size:8px;color:#101030;font-weight:400;white-space:nowrap;transform-origin:left center;transform:scaleX(0.86);">Paisagem</div>
<div style="position:absolute;left:191px;top:173.8px;width:809px;height:27px;background:#767171"></div>
<div style="position:absolute;left:395.50px;width:400px;text-align:center;top:179.50px;line-height:18.60px;font-size:15.5px;color:#fff;font-weight:700;white-space:nowrap;transform-origin:center center;">RELATÓRIO ANUAL</div>
<div style="position:absolute;left:191.0px;top:203px;width:95.19999999999999px;height:21px;background:#767171"></div>
<div style="position:absolute;left:38.85px;width:400px;text-align:center;top:208.80px;line-height:10.80px;font-size:9px;color:#fff;font-weight:700;white-space:nowrap;transform-origin:center center;">Meses</div>
<div style="position:absolute;left:288.2px;top:203px;width:105.30000000000001px;height:21px;background:#767171"></div>
<div style="position:absolute;left:140.85px;width:400px;text-align:center;top:208.80px;line-height:10.80px;font-size:9px;color:#fff;font-weight:700;white-space:nowrap;transform-origin:center center;">Numero de Compras</div>
<div style="position:absolute;left:395.5px;top:203px;width:111.5px;height:21px;background:#767171"></div>
<div style="position:absolute;left:251.25px;width:400px;text-align:center;top:208.80px;line-height:10.80px;font-size:9px;color:#fff;font-weight:700;white-space:nowrap;transform-origin:center center;">Taxa Gasta Compra</div>
<div style="position:absolute;left:509px;top:203px;width:90px;height:21px;background:#767171"></div>
<div style="position:absolute;left:354.00px;width:400px;text-align:center;top:208.80px;line-height:10.80px;font-size:9px;color:#fff;font-weight:700;white-space:nowrap;transform-origin:center center;">Valor Investido</div>
<div style="position:absolute;left:601px;top:203px;width:105.29999999999995px;height:21px;background:#767171"></div>
<div style="position:absolute;left:453.65px;width:400px;text-align:center;top:208.80px;line-height:10.80px;font-size:9px;color:#fff;font-weight:700;white-space:nowrap;transform-origin:center center;">Numero de Vendas</div>
<div style="position:absolute;left:708.3px;top:203px;width:96.70000000000005px;height:21px;background:#767171"></div>
<div style="position:absolute;left:556.65px;width:400px;text-align:center;top:208.80px;line-height:10.80px;font-size:9px;color:#fff;font-weight:700;white-space:nowrap;transform-origin:center center;">Taxa Gasta Venda</div>
<div style="position:absolute;left:807px;top:203px;width:95.29999999999995px;height:21px;background:#767171"></div>
<div style="position:absolute;left:654.65px;width:400px;text-align:center;top:208.80px;line-height:10.80px;font-size:9px;color:#fff;font-weight:700;white-space:nowrap;transform-origin:center center;">Valor de Vendas</div>
<div style="position:absolute;left:904.3px;top:203px;width:94.70000000000005px;height:21px;background:#767171"></div>
<div style="position:absolute;left:751.65px;width:400px;text-align:center;top:208.80px;line-height:10.80px;font-size:9px;color:#fff;font-weight:700;white-space:nowrap;transform-origin:center center;">Lucro</div>
<div style="position:absolute;left:288.2px;top:226px;width:615.1px;height:299.5px;background:#f2f2f2"></div>
<div style="position:absolute;left:191px;top:226.3px;width:95.3px;height:20.869999999999994px;background:#767171"></div>
<div style="position:absolute;left:38.80px;width:400px;text-align:center;top:232.46px;line-height:10.56px;font-size:8.8px;color:#fff;font-weight:700;white-space:nowrap;transform-origin:center center;">Janeiro</div>
<div style="position:absolute;left:288px;top:248.07px;width:615.3px;height:1px;background:#dcdcdc"></div>
<div style="position:absolute;left:140.85px;width:400px;text-align:center;top:230.44px;line-height:12.60px;font-size:10.5px;color:#262626;font-weight:400;white-space:nowrap;transform-origin:center center;transform:scaleX(0.9);">3</div>
<div style="position:absolute;left:453.65px;width:400px;text-align:center;top:230.44px;line-height:12.60px;font-size:10.5px;color:#262626;font-weight:400;white-space:nowrap;transform-origin:center center;transform:scaleX(0.9);">0</div>
<div style="position:absolute;left:400.0px;top:230.44px;line-height:12.60px;font-size:10.5px;color:#262626;font-weight:400;white-space:nowrap;transform-origin:left center;transform:scaleX(0.77);">R$</div>
<div style="position:absolute;left:102.20px;width:400px;text-align:right;top:230.44px;line-height:12.60px;font-size:10.5px;color:#262626;font-weight:400;white-space:nowrap;transform-origin:right center;transform:scaleX(0.9);">228,00</div>
<div style="position:absolute;left:513.5px;top:230.44px;line-height:12.60px;font-size:10.5px;color:#262626;font-weight:400;white-space:nowrap;transform-origin:left center;transform:scaleX(0.77);">R$</div>
<div style="position:absolute;left:194.20px;width:400px;text-align:right;top:230.44px;line-height:12.60px;font-size:10.5px;color:#262626;font-weight:400;white-space:nowrap;transform-origin:right center;transform:scaleX(0.9);">2.870,00</div>
<div style="position:absolute;left:712.8px;top:230.44px;line-height:12.60px;font-size:10.5px;color:#262626;font-weight:400;white-space:nowrap;transform-origin:left center;transform:scaleX(0.77);">R$</div>
<div style="position:absolute;left:389.70px;width:400px;text-align:right;top:230.44px;line-height:12.60px;font-size:10.5px;color:#262626;font-weight:400;white-space:nowrap;transform-origin:right center;transform:scaleX(0.9);">-</div>
<div style="position:absolute;left:811.5px;top:230.44px;line-height:12.60px;font-size:10.5px;color:#262626;font-weight:400;white-space:nowrap;transform-origin:left center;transform:scaleX(0.77);">R$</div>
<div style="position:absolute;left:487.00px;width:400px;text-align:right;top:230.44px;line-height:12.60px;font-size:10.5px;color:#262626;font-weight:400;white-space:nowrap;transform-origin:right center;transform:scaleX(0.9);">-</div>
<div style="position:absolute;left:903.3px;top:226px;width:96.7px;height:22.370000000000005px;background:#ffc7ce"></div>
<div style="position:absolute;left:903.3px;top:248.07px;width:96.7px;height:1px;background:#f4b8c0"></div>
<div style="position:absolute;left:906.3px;top:230.44px;line-height:12.60px;font-size:10.5px;color:#9c0006;font-weight:400;white-space:nowrap;transform-origin:left center;transform:scaleX(0.78);">-R$</div>
<div style="position:absolute;left:594.20px;width:400px;text-align:right;top:230.44px;line-height:12.60px;font-size:10.5px;color:#9c0006;font-weight:400;white-space:nowrap;transform-origin:right center;transform:scaleX(0.9);">3.098,00</div>
<div style="position:absolute;left:191px;top:249.37px;width:95.3px;height:20.869999999999994px;background:#767171"></div>
<div style="position:absolute;left:38.80px;width:400px;text-align:center;top:255.52px;line-height:10.56px;font-size:8.8px;color:#fff;font-weight:700;white-space:nowrap;transform-origin:center center;">Fevereiro</div>
<div style="position:absolute;left:288px;top:271.14px;width:615.3px;height:1px;background:#dcdcdc"></div>
<div style="position:absolute;left:140.85px;width:400px;text-align:center;top:253.50px;line-height:12.60px;font-size:10.5px;color:#262626;font-weight:400;white-space:nowrap;transform-origin:center center;transform:scaleX(0.9);">1</div>
<div style="position:absolute;left:453.65px;width:400px;text-align:center;top:253.50px;line-height:12.60px;font-size:10.5px;color:#262626;font-weight:400;white-space:nowrap;transform-origin:center center;transform:scaleX(0.9);">0</div>
<div style="position:absolute;left:400.0px;top:253.50px;line-height:12.60px;font-size:10.5px;color:#262626;font-weight:400;white-space:nowrap;transform-origin:left center;transform:scaleX(0.77);">R$</div>
<div style="position:absolute;left:102.20px;width:400px;text-align:right;top:253.50px;line-height:12.60px;font-size:10.5px;color:#262626;font-weight:400;white-space:nowrap;transform-origin:right center;transform:scaleX(0.9);">100,00</div>
<div style="position:absolute;left:513.5px;top:253.50px;line-height:12.60px;font-size:10.5px;color:#262626;font-weight:400;white-space:nowrap;transform-origin:left center;transform:scaleX(0.77);">R$</div>
<div style="position:absolute;left:194.20px;width:400px;text-align:right;top:253.50px;line-height:12.60px;font-size:10.5px;color:#262626;font-weight:400;white-space:nowrap;transform-origin:right center;transform:scaleX(0.9);">731,00</div>
<div style="position:absolute;left:712.8px;top:253.50px;line-height:12.60px;font-size:10.5px;color:#262626;font-weight:400;white-space:nowrap;transform-origin:left center;transform:scaleX(0.77);">R$</div>
<div style="position:absolute;left:389.70px;width:400px;text-align:right;top:253.50px;line-height:12.60px;font-size:10.5px;color:#262626;font-weight:400;white-space:nowrap;transform-origin:right center;transform:scaleX(0.9);">-</div>
<div style="position:absolute;left:811.5px;top:253.50px;line-height:12.60px;font-size:10.5px;color:#262626;font-weight:400;white-space:nowrap;transform-origin:left center;transform:scaleX(0.77);">R$</div>
<div style="position:absolute;left:487.00px;width:400px;text-align:right;top:253.50px;line-height:12.60px;font-size:10.5px;color:#262626;font-weight:400;white-space:nowrap;transform-origin:right center;transform:scaleX(0.9);">-</div>
<div style="position:absolute;left:903.3px;top:248.37px;width:96.7px;height:23.069999999999993px;background:#ffc7ce"></div>
<div style="position:absolute;left:903.3px;top:271.14px;width:96.7px;height:1px;background:#f4b8c0"></div>
<div style="position:absolute;left:906.3px;top:253.50px;line-height:12.60px;font-size:10.5px;color:#9c0006;font-weight:400;white-space:nowrap;transform-origin:left center;transform:scaleX(0.78);">-R$</div>
<div style="position:absolute;left:594.20px;width:400px;text-align:right;top:253.50px;line-height:12.60px;font-size:10.5px;color:#9c0006;font-weight:400;white-space:nowrap;transform-origin:right center;transform:scaleX(0.9);">831,00</div>
<div style="position:absolute;left:191px;top:272.44px;width:95.3px;height:20.869999999999994px;background:#767171"></div>
<div style="position:absolute;left:38.80px;width:400px;text-align:center;top:278.60px;line-height:10.56px;font-size:8.8px;color:#fff;font-weight:700;white-space:nowrap;transform-origin:center center;">Março</div>
<div style="position:absolute;left:288px;top:294.21px;width:615.3px;height:1px;background:#dcdcdc"></div>
<div style="position:absolute;left:140.85px;width:400px;text-align:center;top:276.58px;line-height:12.60px;font-size:10.5px;color:#262626;font-weight:400;white-space:nowrap;transform-origin:center center;transform:scaleX(0.9);">1</div>
<div style="position:absolute;left:453.65px;width:400px;text-align:center;top:276.58px;line-height:12.60px;font-size:10.5px;color:#262626;font-weight:400;white-space:nowrap;transform-origin:center center;transform:scaleX(0.9);">0</div>
<div style="position:absolute;left:400.0px;top:276.58px;line-height:12.60px;font-size:10.5px;color:#262626;font-weight:400;white-space:nowrap;transform-origin:left center;transform:scaleX(0.77);">R$</div>
<div style="position:absolute;left:102.20px;width:400px;text-align:right;top:276.58px;line-height:12.60px;font-size:10.5px;color:#262626;font-weight:400;white-space:nowrap;transform-origin:right center;transform:scaleX(0.9);">100,00</div>
<div style="position:absolute;left:513.5px;top:276.58px;line-height:12.60px;font-size:10.5px;color:#262626;font-weight:400;white-space:nowrap;transform-origin:left center;transform:scaleX(0.77);">R$</div>
<div style="position:absolute;left:194.20px;width:400px;text-align:right;top:276.58px;line-height:12.60px;font-size:10.5px;color:#262626;font-weight:400;white-space:nowrap;transform-origin:right center;transform:scaleX(0.9);">923,00</div>
<div style="position:absolute;left:712.8px;top:276.58px;line-height:12.60px;font-size:10.5px;color:#262626;font-weight:400;white-space:nowrap;transform-origin:left center;transform:scaleX(0.77);">R$</div>
<div style="position:absolute;left:389.70px;width:400px;text-align:right;top:276.58px;line-height:12.60px;font-size:10.5px;color:#262626;font-weight:400;white-space:nowrap;transform-origin:right center;transform:scaleX(0.9);">-</div>
<div style="position:absolute;left:811.5px;top:276.58px;line-height:12.60px;font-size:10.5px;color:#262626;font-weight:400;white-space:nowrap;transform-origin:left center;transform:scaleX(0.77);">R$</div>
<div style="position:absolute;left:487.00px;width:400px;text-align:right;top:276.58px;line-height:12.60px;font-size:10.5px;color:#262626;font-weight:400;white-space:nowrap;transform-origin:right center;transform:scaleX(0.9);">-</div>
<div style="position:absolute;left:903.3px;top:271.44px;width:96.7px;height:23.069999999999993px;background:#ffc7ce"></div>
<div style="position:absolute;left:903.3px;top:294.21px;width:96.7px;height:1px;background:#f4b8c0"></div>
<div style="position:absolute;left:906.3px;top:276.58px;line-height:12.60px;font-size:10.5px;color:#9c0006;font-weight:400;white-space:nowrap;transform-origin:left center;transform:scaleX(0.78);">-R$</div>
<div style="position:absolute;left:594.20px;width:400px;text-align:right;top:276.58px;line-height:12.60px;font-size:10.5px;color:#9c0006;font-weight:400;white-space:nowrap;transform-origin:right center;transform:scaleX(0.9);">1.023,00</div>
<div style="position:absolute;left:191px;top:295.51px;width:95.3px;height:20.87000000000005px;background:#767171"></div>
<div style="position:absolute;left:38.80px;width:400px;text-align:center;top:301.67px;line-height:10.56px;font-size:8.8px;color:#fff;font-weight:700;white-space:nowrap;transform-origin:center center;">Abril</div>
<div style="position:absolute;left:288px;top:317.28000000000003px;width:615.3px;height:1px;background:#dcdcdc"></div>
<div style="position:absolute;left:140.85px;width:400px;text-align:center;top:299.65px;line-height:12.60px;font-size:10.5px;color:#262626;font-weight:400;white-space:nowrap;transform-origin:center center;transform:scaleX(0.9);">0</div>
<div style="position:absolute;left:453.65px;width:400px;text-align:center;top:299.65px;line-height:12.60px;font-size:10.5px;color:#262626;font-weight:400;white-space:nowrap;transform-origin:center center;transform:scaleX(0.9);">1</div>
<div style="position:absolute;left:400.0px;top:299.65px;line-height:12.60px;font-size:10.5px;color:#262626;font-weight:400;white-space:nowrap;transform-origin:left center;transform:scaleX(0.77);">R$</div>
<div style="position:absolute;left:91.70px;width:400px;text-align:right;top:299.65px;line-height:12.60px;font-size:10.5px;color:#262626;font-weight:400;white-space:nowrap;transform-origin:right center;transform:scaleX(0.9);">-</div>
<div style="position:absolute;left:513.5px;top:299.65px;line-height:12.60px;font-size:10.5px;color:#262626;font-weight:400;white-space:nowrap;transform-origin:left center;transform:scaleX(0.77);">R$</div>
<div style="position:absolute;left:183.70px;width:400px;text-align:right;top:299.65px;line-height:12.60px;font-size:10.5px;color:#262626;font-weight:400;white-space:nowrap;transform-origin:right center;transform:scaleX(0.9);">-</div>
<div style="position:absolute;left:712.8px;top:299.65px;line-height:12.60px;font-size:10.5px;color:#262626;font-weight:400;white-space:nowrap;transform-origin:left center;transform:scaleX(0.77);">R$</div>
<div style="position:absolute;left:400.20px;width:400px;text-align:right;top:299.65px;line-height:12.60px;font-size:10.5px;color:#262626;font-weight:400;white-space:nowrap;transform-origin:right center;transform:scaleX(0.9);">60,00</div>
<div style="position:absolute;left:811.5px;top:299.65px;line-height:12.60px;font-size:10.5px;color:#262626;font-weight:400;white-space:nowrap;transform-origin:left center;transform:scaleX(0.77);">R$</div>
<div style="position:absolute;left:497.50px;width:400px;text-align:right;top:299.65px;line-height:12.60px;font-size:10.5px;color:#262626;font-weight:400;white-space:nowrap;transform-origin:right center;transform:scaleX(0.9);">578,00</div>
<div style="position:absolute;left:903.3px;top:294.51px;width:96.7px;height:23.07000000000005px;background:#c6efce"></div>
<div style="position:absolute;left:903.3px;top:317.28000000000003px;width:96.7px;height:1px;background:#b5e0be"></div>
<div style="position:absolute;left:908.8px;top:299.65px;line-height:12.60px;font-size:10.5px;color:#006100;font-weight:400;white-space:nowrap;transform-origin:left center;transform:scaleX(0.77);">R$</div>
<div style="position:absolute;left:594.20px;width:400px;text-align:right;top:299.65px;line-height:12.60px;font-size:10.5px;color:#006100;font-weight:400;white-space:nowrap;transform-origin:right center;transform:scaleX(0.9);">518,00</div>
<div style="position:absolute;left:191px;top:318.58000000000004px;width:95.3px;height:20.869999999999937px;background:#767171"></div>
<div style="position:absolute;left:38.80px;width:400px;text-align:center;top:324.74px;line-height:10.56px;font-size:8.8px;color:#fff;font-weight:700;white-space:nowrap;transform-origin:center center;">Maio</div>
<div style="position:absolute;left:288px;top:340.34999999999997px;width:615.3px;height:1px;background:#dcdcdc"></div>
<div style="position:absolute;left:140.85px;width:400px;text-align:center;top:322.72px;line-height:12.60px;font-size:10.5px;color:#262626;font-weight:400;white-space:nowrap;transform-origin:center center;transform:scaleX(0.9);">0</div>
<div style="position:absolute;left:453.65px;width:400px;text-align:center;top:322.72px;line-height:12.60px;font-size:10.5px;color:#262626;font-weight:400;white-space:nowrap;transform-origin:center center;transform:scaleX(0.9);">0</div>
<div style="position:absolute;left:400.0px;top:322.72px;line-height:12.60px;font-size:10.5px;color:#262626;font-weight:400;white-space:nowrap;transform-origin:left center;transform:scaleX(0.77);">R$</div>
<div style="position:absolute;left:91.70px;width:400px;text-align:right;top:322.72px;line-height:12.60px;font-size:10.5px;color:#262626;font-weight:400;white-space:nowrap;transform-origin:right center;transform:scaleX(0.9);">-</div>
<div style="position:absolute;left:513.5px;top:322.72px;line-height:12.60px;font-size:10.5px;color:#262626;font-weight:400;white-space:nowrap;transform-origin:left center;transform:scaleX(0.77);">R$</div>
<div style="position:absolute;left:183.70px;width:400px;text-align:right;top:322.72px;line-height:12.60px;font-size:10.5px;color:#262626;font-weight:400;white-space:nowrap;transform-origin:right center;transform:scaleX(0.9);">-</div>
<div style="position:absolute;left:712.8px;top:322.72px;line-height:12.60px;font-size:10.5px;color:#262626;font-weight:400;white-space:nowrap;transform-origin:left center;transform:scaleX(0.77);">R$</div>
<div style="position:absolute;left:389.70px;width:400px;text-align:right;top:322.72px;line-height:12.60px;font-size:10.5px;color:#262626;font-weight:400;white-space:nowrap;transform-origin:right center;transform:scaleX(0.9);">-</div>
<div style="position:absolute;left:811.5px;top:322.72px;line-height:12.60px;font-size:10.5px;color:#262626;font-weight:400;white-space:nowrap;transform-origin:left center;transform:scaleX(0.77);">R$</div>
<div style="position:absolute;left:487.00px;width:400px;text-align:right;top:322.72px;line-height:12.60px;font-size:10.5px;color:#262626;font-weight:400;white-space:nowrap;transform-origin:right center;transform:scaleX(0.9);">-</div>
<div style="position:absolute;left:903.3px;top:317.58000000000004px;width:96.7px;height:23.069999999999936px;background:#f2f2f2;border-bottom:1px solid #dcdcdc;box-sizing:border-box"></div>
<div style="position:absolute;left:908.8px;top:322.72px;line-height:12.60px;font-size:10.5px;color:#262626;font-weight:400;white-space:nowrap;transform-origin:left center;transform:scaleX(0.77);">R$</div>
<div style="position:absolute;left:583.70px;width:400px;text-align:right;top:322.72px;line-height:12.60px;font-size:10.5px;color:#262626;font-weight:400;white-space:nowrap;transform-origin:right center;transform:scaleX(0.9);">-</div>
<div style="position:absolute;left:191px;top:341.65px;width:95.3px;height:20.87000000000005px;background:#767171"></div>
<div style="position:absolute;left:38.80px;width:400px;text-align:center;top:347.81px;line-height:10.56px;font-size:8.8px;color:#fff;font-weight:700;white-space:nowrap;transform-origin:center center;">Junho</div>
<div style="position:absolute;left:288px;top:363.42px;width:615.3px;height:1px;background:#dcdcdc"></div>
<div style="position:absolute;left:140.85px;width:400px;text-align:center;top:345.79px;line-height:12.60px;font-size:10.5px;color:#262626;font-weight:400;white-space:nowrap;transform-origin:center center;transform:scaleX(0.9);">0</div>
<div style="position:absolute;left:453.65px;width:400px;text-align:center;top:345.79px;line-height:12.60px;font-size:10.5px;color:#262626;font-weight:400;white-space:nowrap;transform-origin:center center;transform:scaleX(0.9);">1</div>
<div style="position:absolute;left:400.0px;top:345.79px;line-height:12.60px;font-size:10.5px;color:#262626;font-weight:400;white-space:nowrap;transform-origin:left center;transform:scaleX(0.77);">R$</div>
<div style="position:absolute;left:91.70px;width:400px;text-align:right;top:345.79px;line-height:12.60px;font-size:10.5px;color:#262626;font-weight:400;white-space:nowrap;transform-origin:right center;transform:scaleX(0.9);">-</div>
<div style="position:absolute;left:513.5px;top:345.79px;line-height:12.60px;font-size:10.5px;color:#262626;font-weight:400;white-space:nowrap;transform-origin:left center;transform:scaleX(0.77);">R$</div>
<div style="position:absolute;left:183.70px;width:400px;text-align:right;top:345.79px;line-height:12.60px;font-size:10.5px;color:#262626;font-weight:400;white-space:nowrap;transform-origin:right center;transform:scaleX(0.9);">-</div>
<div style="position:absolute;left:712.8px;top:345.79px;line-height:12.60px;font-size:10.5px;color:#262626;font-weight:400;white-space:nowrap;transform-origin:left center;transform:scaleX(0.77);">R$</div>
<div style="position:absolute;left:400.20px;width:400px;text-align:right;top:345.79px;line-height:12.60px;font-size:10.5px;color:#262626;font-weight:400;white-space:nowrap;transform-origin:right center;transform:scaleX(0.9);">100,00</div>
<div style="position:absolute;left:811.5px;top:345.79px;line-height:12.60px;font-size:10.5px;color:#262626;font-weight:400;white-space:nowrap;transform-origin:left center;transform:scaleX(0.77);">R$</div>
<div style="position:absolute;left:497.50px;width:400px;text-align:right;top:345.79px;line-height:12.60px;font-size:10.5px;color:#262626;font-weight:400;white-space:nowrap;transform-origin:right center;transform:scaleX(0.9);">5.136,53</div>
<div style="position:absolute;left:903.3px;top:340.65px;width:96.7px;height:23.07000000000005px;background:#c6efce"></div>
<div style="position:absolute;left:903.3px;top:363.42px;width:96.7px;height:1px;background:#b5e0be"></div>
<div style="position:absolute;left:908.8px;top:345.79px;line-height:12.60px;font-size:10.5px;color:#006100;font-weight:400;white-space:nowrap;transform-origin:left center;transform:scaleX(0.77);">R$</div>
<div style="position:absolute;left:594.20px;width:400px;text-align:right;top:345.79px;line-height:12.60px;font-size:10.5px;color:#006100;font-weight:400;white-space:nowrap;transform-origin:right center;transform:scaleX(0.9);">5.036,53</div>
<div style="position:absolute;left:191px;top:364.72px;width:95.3px;height:20.869999999999994px;background:#767171"></div>
<div style="position:absolute;left:38.80px;width:400px;text-align:center;top:370.88px;line-height:10.56px;font-size:8.8px;color:#fff;font-weight:700;white-space:nowrap;transform-origin:center center;">Julho</div>
<div style="position:absolute;left:288px;top:386.49px;width:615.3px;height:1px;background:#dcdcdc"></div>
<div style="position:absolute;left:140.85px;width:400px;text-align:center;top:368.86px;line-height:12.60px;font-size:10.5px;color:#262626;font-weight:400;white-space:nowrap;transform-origin:center center;transform:scaleX(0.9);">1</div>
<div style="position:absolute;left:453.65px;width:400px;text-align:center;top:368.86px;line-height:12.60px;font-size:10.5px;color:#262626;font-weight:400;white-space:nowrap;transform-origin:center center;transform:scaleX(0.9);">0</div>
<div style="position:absolute;left:400.0px;top:368.86px;line-height:12.60px;font-size:10.5px;color:#262626;font-weight:400;white-space:nowrap;transform-origin:left center;transform:scaleX(0.77);">R$</div>
<div style="position:absolute;left:102.20px;width:400px;text-align:right;top:368.86px;line-height:12.60px;font-size:10.5px;color:#262626;font-weight:400;white-space:nowrap;transform-origin:right center;transform:scaleX(0.9);">5,00</div>
<div style="position:absolute;left:513.5px;top:368.86px;line-height:12.60px;font-size:10.5px;color:#262626;font-weight:400;white-space:nowrap;transform-origin:left center;transform:scaleX(0.77);">R$</div>
<div style="position:absolute;left:194.20px;width:400px;text-align:right;top:368.86px;line-height:12.60px;font-size:10.5px;color:#262626;font-weight:400;white-space:nowrap;transform-origin:right center;transform:scaleX(0.9);">2.000,00</div>
<div style="position:absolute;left:712.8px;top:368.86px;line-height:12.60px;font-size:10.5px;color:#262626;font-weight:400;white-space:nowrap;transform-origin:left center;transform:scaleX(0.77);">R$</div>
<div style="position:absolute;left:389.70px;width:400px;text-align:right;top:368.86px;line-height:12.60px;font-size:10.5px;color:#262626;font-weight:400;white-space:nowrap;transform-origin:right center;transform:scaleX(0.9);">-</div>
<div style="position:absolute;left:811.5px;top:368.86px;line-height:12.60px;font-size:10.5px;color:#262626;font-weight:400;white-space:nowrap;transform-origin:left center;transform:scaleX(0.77);">R$</div>
<div style="position:absolute;left:487.00px;width:400px;text-align:right;top:368.86px;line-height:12.60px;font-size:10.5px;color:#262626;font-weight:400;white-space:nowrap;transform-origin:right center;transform:scaleX(0.9);">-</div>
<div style="position:absolute;left:903.3px;top:363.72px;width:96.7px;height:23.069999999999993px;background:#ffc7ce"></div>
<div style="position:absolute;left:903.3px;top:386.49px;width:96.7px;height:1px;background:#f4b8c0"></div>
<div style="position:absolute;left:906.3px;top:368.86px;line-height:12.60px;font-size:10.5px;color:#9c0006;font-weight:400;white-space:nowrap;transform-origin:left center;transform:scaleX(0.78);">-R$</div>
<div style="position:absolute;left:594.20px;width:400px;text-align:right;top:368.86px;line-height:12.60px;font-size:10.5px;color:#9c0006;font-weight:400;white-space:nowrap;transform-origin:right center;transform:scaleX(0.9);">2.005,00</div>
<div style="position:absolute;left:191px;top:387.79px;width:95.3px;height:20.869999999999994px;background:#767171"></div>
<div style="position:absolute;left:38.80px;width:400px;text-align:center;top:393.95px;line-height:10.56px;font-size:8.8px;color:#fff;font-weight:700;white-space:nowrap;transform-origin:center center;">Agosto</div>
<div style="position:absolute;left:288px;top:409.56px;width:615.3px;height:1px;background:#dcdcdc"></div>
<div style="position:absolute;left:140.85px;width:400px;text-align:center;top:391.93px;line-height:12.60px;font-size:10.5px;color:#262626;font-weight:400;white-space:nowrap;transform-origin:center center;transform:scaleX(0.9);">0</div>
<div style="position:absolute;left:453.65px;width:400px;text-align:center;top:391.93px;line-height:12.60px;font-size:10.5px;color:#262626;font-weight:400;white-space:nowrap;transform-origin:center center;transform:scaleX(0.9);">0</div>
<div style="position:absolute;left:400.0px;top:391.93px;line-height:12.60px;font-size:10.5px;color:#262626;font-weight:400;white-space:nowrap;transform-origin:left center;transform:scaleX(0.77);">R$</div>
<div style="position:absolute;left:91.70px;width:400px;text-align:right;top:391.93px;line-height:12.60px;font-size:10.5px;color:#262626;font-weight:400;white-space:nowrap;transform-origin:right center;transform:scaleX(0.9);">-</div>
<div style="position:absolute;left:513.5px;top:391.93px;line-height:12.60px;font-size:10.5px;color:#262626;font-weight:400;white-space:nowrap;transform-origin:left center;transform:scaleX(0.77);">R$</div>
<div style="position:absolute;left:183.70px;width:400px;text-align:right;top:391.93px;line-height:12.60px;font-size:10.5px;color:#262626;font-weight:400;white-space:nowrap;transform-origin:right center;transform:scaleX(0.9);">-</div>
<div style="position:absolute;left:712.8px;top:391.93px;line-height:12.60px;font-size:10.5px;color:#262626;font-weight:400;white-space:nowrap;transform-origin:left center;transform:scaleX(0.77);">R$</div>
<div style="position:absolute;left:389.70px;width:400px;text-align:right;top:391.93px;line-height:12.60px;font-size:10.5px;color:#262626;font-weight:400;white-space:nowrap;transform-origin:right center;transform:scaleX(0.9);">-</div>
<div style="position:absolute;left:811.5px;top:391.93px;line-height:12.60px;font-size:10.5px;color:#262626;font-weight:400;white-space:nowrap;transform-origin:left center;transform:scaleX(0.77);">R$</div>
<div style="position:absolute;left:487.00px;width:400px;text-align:right;top:391.93px;line-height:12.60px;font-size:10.5px;color:#262626;font-weight:400;white-space:nowrap;transform-origin:right center;transform:scaleX(0.9);">-</div>
<div style="position:absolute;left:903.3px;top:386.79px;width:96.7px;height:23.069999999999993px;background:#f2f2f2;border-bottom:1px solid #dcdcdc;box-sizing:border-box"></div>
<div style="position:absolute;left:908.8px;top:391.93px;line-height:12.60px;font-size:10.5px;color:#262626;font-weight:400;white-space:nowrap;transform-origin:left center;transform:scaleX(0.77);">R$</div>
<div style="position:absolute;left:583.70px;width:400px;text-align:right;top:391.93px;line-height:12.60px;font-size:10.5px;color:#262626;font-weight:400;white-space:nowrap;transform-origin:right center;transform:scaleX(0.9);">-</div>
<div style="position:absolute;left:191px;top:410.86px;width:95.3px;height:20.869999999999994px;background:#767171"></div>
<div style="position:absolute;left:38.80px;width:400px;text-align:center;top:417.02px;line-height:10.56px;font-size:8.8px;color:#fff;font-weight:700;white-space:nowrap;transform-origin:center center;">Setembro</div>
<div style="position:absolute;left:288px;top:432.63px;width:615.3px;height:1px;background:#dcdcdc"></div>
<div style="position:absolute;left:140.85px;width:400px;text-align:center;top:415.00px;line-height:12.60px;font-size:10.5px;color:#262626;font-weight:400;white-space:nowrap;transform-origin:center center;transform:scaleX(0.9);">0</div>
<div style="position:absolute;left:453.65px;width:400px;text-align:center;top:415.00px;line-height:12.60px;font-size:10.5px;color:#262626;font-weight:400;white-space:nowrap;transform-origin:center center;transform:scaleX(0.9);">0</div>
<div style="position:absolute;left:400.0px;top:415.00px;line-height:12.60px;font-size:10.5px;color:#262626;font-weight:400;white-space:nowrap;transform-origin:left center;transform:scaleX(0.77);">R$</div>
<div style="position:absolute;left:91.70px;width:400px;text-align:right;top:415.00px;line-height:12.60px;font-size:10.5px;color:#262626;font-weight:400;white-space:nowrap;transform-origin:right center;transform:scaleX(0.9);">-</div>
<div style="position:absolute;left:513.5px;top:415.00px;line-height:12.60px;font-size:10.5px;color:#262626;font-weight:400;white-space:nowrap;transform-origin:left center;transform:scaleX(0.77);">R$</div>
<div style="position:absolute;left:183.70px;width:400px;text-align:right;top:415.00px;line-height:12.60px;font-size:10.5px;color:#262626;font-weight:400;white-space:nowrap;transform-origin:right center;transform:scaleX(0.9);">-</div>
<div style="position:absolute;left:712.8px;top:415.00px;line-height:12.60px;font-size:10.5px;color:#262626;font-weight:400;white-space:nowrap;transform-origin:left center;transform:scaleX(0.77);">R$</div>
<div style="position:absolute;left:389.70px;width:400px;text-align:right;top:415.00px;line-height:12.60px;font-size:10.5px;color:#262626;font-weight:400;white-space:nowrap;transform-origin:right center;transform:scaleX(0.9);">-</div>
<div style="position:absolute;left:811.5px;top:415.00px;line-height:12.60px;font-size:10.5px;color:#262626;font-weight:400;white-space:nowrap;transform-origin:left center;transform:scaleX(0.77);">R$</div>
<div style="position:absolute;left:487.00px;width:400px;text-align:right;top:415.00px;line-height:12.60px;font-size:10.5px;color:#262626;font-weight:400;white-space:nowrap;transform-origin:right center;transform:scaleX(0.9);">-</div>
<div style="position:absolute;left:903.3px;top:409.86px;width:96.7px;height:23.069999999999993px;background:#f2f2f2;border-bottom:1px solid #dcdcdc;box-sizing:border-box"></div>
<div style="position:absolute;left:908.8px;top:415.00px;line-height:12.60px;font-size:10.5px;color:#262626;font-weight:400;white-space:nowrap;transform-origin:left center;transform:scaleX(0.77);">R$</div>
<div style="position:absolute;left:583.70px;width:400px;text-align:right;top:415.00px;line-height:12.60px;font-size:10.5px;color:#262626;font-weight:400;white-space:nowrap;transform-origin:right center;transform:scaleX(0.9);">-</div>
<div style="position:absolute;left:191px;top:433.93px;width:95.3px;height:20.869999999999994px;background:#767171"></div>
<div style="position:absolute;left:38.80px;width:400px;text-align:center;top:440.09px;line-height:10.56px;font-size:8.8px;color:#fff;font-weight:700;white-space:nowrap;transform-origin:center center;">Outubro</div>
<div style="position:absolute;left:288px;top:455.7px;width:615.3px;height:1px;background:#dcdcdc"></div>
<div style="position:absolute;left:140.85px;width:400px;text-align:center;top:438.07px;line-height:12.60px;font-size:10.5px;color:#262626;font-weight:400;white-space:nowrap;transform-origin:center center;transform:scaleX(0.9);">0</div>
<div style="position:absolute;left:453.65px;width:400px;text-align:center;top:438.07px;line-height:12.60px;font-size:10.5px;color:#262626;font-weight:400;white-space:nowrap;transform-origin:center center;transform:scaleX(0.9);">0</div>
<div style="position:absolute;left:400.0px;top:438.07px;line-height:12.60px;font-size:10.5px;color:#262626;font-weight:400;white-space:nowrap;transform-origin:left center;transform:scaleX(0.77);">R$</div>
<div style="position:absolute;left:91.70px;width:400px;text-align:right;top:438.07px;line-height:12.60px;font-size:10.5px;color:#262626;font-weight:400;white-space:nowrap;transform-origin:right center;transform:scaleX(0.9);">-</div>
<div style="position:absolute;left:513.5px;top:438.07px;line-height:12.60px;font-size:10.5px;color:#262626;font-weight:400;white-space:nowrap;transform-origin:left center;transform:scaleX(0.77);">R$</div>
<div style="position:absolute;left:183.70px;width:400px;text-align:right;top:438.07px;line-height:12.60px;font-size:10.5px;color:#262626;font-weight:400;white-space:nowrap;transform-origin:right center;transform:scaleX(0.9);">-</div>
<div style="position:absolute;left:712.8px;top:438.07px;line-height:12.60px;font-size:10.5px;color:#262626;font-weight:400;white-space:nowrap;transform-origin:left center;transform:scaleX(0.77);">R$</div>
<div style="position:absolute;left:389.70px;width:400px;text-align:right;top:438.07px;line-height:12.60px;font-size:10.5px;color:#262626;font-weight:400;white-space:nowrap;transform-origin:right center;transform:scaleX(0.9);">-</div>
<div style="position:absolute;left:811.5px;top:438.07px;line-height:12.60px;font-size:10.5px;color:#262626;font-weight:400;white-space:nowrap;transform-origin:left center;transform:scaleX(0.77);">R$</div>
<div style="position:absolute;left:487.00px;width:400px;text-align:right;top:438.07px;line-height:12.60px;font-size:10.5px;color:#262626;font-weight:400;white-space:nowrap;transform-origin:right center;transform:scaleX(0.9);">-</div>
<div style="position:absolute;left:903.3px;top:432.93px;width:96.7px;height:23.069999999999993px;background:#f2f2f2;border-bottom:1px solid #dcdcdc;box-sizing:border-box"></div>
<div style="position:absolute;left:908.8px;top:438.07px;line-height:12.60px;font-size:10.5px;color:#262626;font-weight:400;white-space:nowrap;transform-origin:left center;transform:scaleX(0.77);">R$</div>
<div style="position:absolute;left:583.70px;width:400px;text-align:right;top:438.07px;line-height:12.60px;font-size:10.5px;color:#262626;font-weight:400;white-space:nowrap;transform-origin:right center;transform:scaleX(0.9);">-</div>
<div style="position:absolute;left:191px;top:457.0px;width:95.3px;height:20.87000000000005px;background:#767171"></div>
<div style="position:absolute;left:38.80px;width:400px;text-align:center;top:463.16px;line-height:10.56px;font-size:8.8px;color:#fff;font-weight:700;white-space:nowrap;transform-origin:center center;">Novembro</div>
<div style="position:absolute;left:288px;top:478.77000000000004px;width:615.3px;height:1px;background:#dcdcdc"></div>
<div style="position:absolute;left:140.85px;width:400px;text-align:center;top:461.14px;line-height:12.60px;font-size:10.5px;color:#262626;font-weight:400;white-space:nowrap;transform-origin:center center;transform:scaleX(0.9);">0</div>
<div style="position:absolute;left:453.65px;width:400px;text-align:center;top:461.14px;line-height:12.60px;font-size:10.5px;color:#262626;font-weight:400;white-space:nowrap;transform-origin:center center;transform:scaleX(0.9);">0</div>
<div style="position:absolute;left:400.0px;top:461.14px;line-height:12.60px;font-size:10.5px;color:#262626;font-weight:400;white-space:nowrap;transform-origin:left center;transform:scaleX(0.77);">R$</div>
<div style="position:absolute;left:91.70px;width:400px;text-align:right;top:461.14px;line-height:12.60px;font-size:10.5px;color:#262626;font-weight:400;white-space:nowrap;transform-origin:right center;transform:scaleX(0.9);">-</div>
<div style="position:absolute;left:513.5px;top:461.14px;line-height:12.60px;font-size:10.5px;color:#262626;font-weight:400;white-space:nowrap;transform-origin:left center;transform:scaleX(0.77);">R$</div>
<div style="position:absolute;left:183.70px;width:400px;text-align:right;top:461.14px;line-height:12.60px;font-size:10.5px;color:#262626;font-weight:400;white-space:nowrap;transform-origin:right center;transform:scaleX(0.9);">-</div>
<div style="position:absolute;left:712.8px;top:461.14px;line-height:12.60px;font-size:10.5px;color:#262626;font-weight:400;white-space:nowrap;transform-origin:left center;transform:scaleX(0.77);">R$</div>
<div style="position:absolute;left:389.70px;width:400px;text-align:right;top:461.14px;line-height:12.60px;font-size:10.5px;color:#262626;font-weight:400;white-space:nowrap;transform-origin:right center;transform:scaleX(0.9);">-</div>
<div style="position:absolute;left:811.5px;top:461.14px;line-height:12.60px;font-size:10.5px;color:#262626;font-weight:400;white-space:nowrap;transform-origin:left center;transform:scaleX(0.77);">R$</div>
<div style="position:absolute;left:487.00px;width:400px;text-align:right;top:461.14px;line-height:12.60px;font-size:10.5px;color:#262626;font-weight:400;white-space:nowrap;transform-origin:right center;transform:scaleX(0.9);">-</div>
<div style="position:absolute;left:903.3px;top:456.0px;width:96.7px;height:23.07000000000005px;background:#f2f2f2;border-bottom:1px solid #dcdcdc;box-sizing:border-box"></div>
<div style="position:absolute;left:908.8px;top:461.14px;line-height:12.60px;font-size:10.5px;color:#262626;font-weight:400;white-space:nowrap;transform-origin:left center;transform:scaleX(0.77);">R$</div>
<div style="position:absolute;left:583.70px;width:400px;text-align:right;top:461.14px;line-height:12.60px;font-size:10.5px;color:#262626;font-weight:400;white-space:nowrap;transform-origin:right center;transform:scaleX(0.9);">-</div>
<div style="position:absolute;left:191px;top:480.07000000000005px;width:95.3px;height:20.869999999999994px;background:#767171"></div>
<div style="position:absolute;left:38.80px;width:400px;text-align:center;top:486.23px;line-height:10.56px;font-size:8.8px;color:#fff;font-weight:700;white-space:nowrap;transform-origin:center center;">Dezembro</div>
<div style="position:absolute;left:288px;top:501.84000000000003px;width:615.3px;height:1px;background:#dcdcdc"></div>
<div style="position:absolute;left:140.85px;width:400px;text-align:center;top:484.21px;line-height:12.60px;font-size:10.5px;color:#262626;font-weight:400;white-space:nowrap;transform-origin:center center;transform:scaleX(0.9);">0</div>
<div style="position:absolute;left:453.65px;width:400px;text-align:center;top:484.21px;line-height:12.60px;font-size:10.5px;color:#262626;font-weight:400;white-space:nowrap;transform-origin:center center;transform:scaleX(0.9);">0</div>
<div style="position:absolute;left:400.0px;top:484.21px;line-height:12.60px;font-size:10.5px;color:#262626;font-weight:400;white-space:nowrap;transform-origin:left center;transform:scaleX(0.77);">R$</div>
<div style="position:absolute;left:91.70px;width:400px;text-align:right;top:484.21px;line-height:12.60px;font-size:10.5px;color:#262626;font-weight:400;white-space:nowrap;transform-origin:right center;transform:scaleX(0.9);">-</div>
<div style="position:absolute;left:513.5px;top:484.21px;line-height:12.60px;font-size:10.5px;color:#262626;font-weight:400;white-space:nowrap;transform-origin:left center;transform:scaleX(0.77);">R$</div>
<div style="position:absolute;left:183.70px;width:400px;text-align:right;top:484.21px;line-height:12.60px;font-size:10.5px;color:#262626;font-weight:400;white-space:nowrap;transform-origin:right center;transform:scaleX(0.9);">-</div>
<div style="position:absolute;left:712.8px;top:484.21px;line-height:12.60px;font-size:10.5px;color:#262626;font-weight:400;white-space:nowrap;transform-origin:left center;transform:scaleX(0.77);">R$</div>
<div style="position:absolute;left:389.70px;width:400px;text-align:right;top:484.21px;line-height:12.60px;font-size:10.5px;color:#262626;font-weight:400;white-space:nowrap;transform-origin:right center;transform:scaleX(0.9);">-</div>
<div style="position:absolute;left:811.5px;top:484.21px;line-height:12.60px;font-size:10.5px;color:#262626;font-weight:400;white-space:nowrap;transform-origin:left center;transform:scaleX(0.77);">R$</div>
<div style="position:absolute;left:487.00px;width:400px;text-align:right;top:484.21px;line-height:12.60px;font-size:10.5px;color:#262626;font-weight:400;white-space:nowrap;transform-origin:right center;transform:scaleX(0.9);">-</div>
<div style="position:absolute;left:903.3px;top:479.07000000000005px;width:96.7px;height:23.069999999999993px;background:#f2f2f2;border-bottom:1px solid #dcdcdc;box-sizing:border-box"></div>
<div style="position:absolute;left:908.8px;top:484.21px;line-height:12.60px;font-size:10.5px;color:#262626;font-weight:400;white-space:nowrap;transform-origin:left center;transform:scaleX(0.77);">R$</div>
<div style="position:absolute;left:583.70px;width:400px;text-align:right;top:484.21px;line-height:12.60px;font-size:10.5px;color:#262626;font-weight:400;white-space:nowrap;transform-origin:right center;transform:scaleX(0.9);">-</div>
<div style="position:absolute;left:191px;top:503.14000000000004px;width:95.3px;height:21.159999999999958px;background:#767171"></div>
<div style="position:absolute;left:38.80px;width:400px;text-align:center;top:509.44px;line-height:10.56px;font-size:8.8px;color:#fff;font-weight:700;white-space:nowrap;transform-origin:center center;">Total</div>
<div style="position:absolute;left:288px;top:525.2px;width:615.3px;height:1px;background:#dcdcdc"></div>
<div style="position:absolute;left:140.85px;width:400px;text-align:center;top:507.42px;line-height:12.60px;font-size:10.5px;color:#262626;font-weight:400;white-space:nowrap;transform-origin:center center;transform:scaleX(0.9);">6</div>
<div style="position:absolute;left:453.65px;width:400px;text-align:center;top:507.42px;line-height:12.60px;font-size:10.5px;color:#262626;font-weight:400;white-space:nowrap;transform-origin:center center;transform:scaleX(0.9);">2</div>
<div style="position:absolute;left:400.0px;top:507.42px;line-height:12.60px;font-size:10.5px;color:#262626;font-weight:400;white-space:nowrap;transform-origin:left center;transform:scaleX(0.77);">R$</div>
<div style="position:absolute;left:102.20px;width:400px;text-align:right;top:507.42px;line-height:12.60px;font-size:10.5px;color:#262626;font-weight:400;white-space:nowrap;transform-origin:right center;transform:scaleX(0.9);">433,00</div>
<div style="position:absolute;left:513.5px;top:507.42px;line-height:12.60px;font-size:10.5px;color:#262626;font-weight:400;white-space:nowrap;transform-origin:left center;transform:scaleX(0.77);">R$</div>
<div style="position:absolute;left:194.20px;width:400px;text-align:right;top:507.42px;line-height:12.60px;font-size:10.5px;color:#262626;font-weight:400;white-space:nowrap;transform-origin:right center;transform:scaleX(0.9);">6.524,00</div>
<div style="position:absolute;left:712.8px;top:507.42px;line-height:12.60px;font-size:10.5px;color:#262626;font-weight:400;white-space:nowrap;transform-origin:left center;transform:scaleX(0.77);">R$</div>
<div style="position:absolute;left:400.20px;width:400px;text-align:right;top:507.42px;line-height:12.60px;font-size:10.5px;color:#262626;font-weight:400;white-space:nowrap;transform-origin:right center;transform:scaleX(0.9);">160,00</div>
<div style="position:absolute;left:811.5px;top:507.42px;line-height:12.60px;font-size:10.5px;color:#262626;font-weight:400;white-space:nowrap;transform-origin:left center;transform:scaleX(0.77);">R$</div>
<div style="position:absolute;left:497.50px;width:400px;text-align:right;top:507.42px;line-height:12.60px;font-size:10.5px;color:#262626;font-weight:400;white-space:nowrap;transform-origin:right center;transform:scaleX(0.9);">5.714,53</div>
<div style="position:absolute;left:903.3px;top:502.14000000000004px;width:96.7px;height:23.359999999999957px;background:#ffc7ce"></div>
<div style="position:absolute;left:903.3px;top:525.2px;width:96.7px;height:1px;background:#f4b8c0"></div>
<div style="position:absolute;left:906.3px;top:507.42px;line-height:12.60px;font-size:10.5px;color:#9c0006;font-weight:400;white-space:nowrap;transform-origin:left center;transform:scaleX(0.78);">-R$</div>
<div style="position:absolute;left:594.20px;width:400px;text-align:right;top:507.42px;line-height:12.60px;font-size:10.5px;color:#9c0006;font-weight:400;white-space:nowrap;transform-origin:right center;transform:scaleX(0.9);">1.402,47</div>
<div style="position:absolute;left:393.7px;top:226px;width:1px;height:299.5px;background:#dcdcdc"></div>
<div style="position:absolute;left:507.2px;top:226px;width:1px;height:299.5px;background:#dcdcdc"></div>
<div style="position:absolute;left:599.2px;top:226px;width:1px;height:299.5px;background:#dcdcdc"></div>
<div style="position:absolute;left:706.5px;top:226px;width:1px;height:299.5px;background:#dcdcdc"></div>
<div style="position:absolute;left:805.2px;top:226px;width:1px;height:299.5px;background:#dcdcdc"></div>
<div style="position:absolute;left:902.5px;top:226px;width:1px;height:299.5px;background:#dcdcdc"></div>
<div style="position:absolute;left:0px;top:565px;width:1024px;height:17px;background:#e6e6e6"></div>
<div style="position:absolute;left:5px;top:565px;width:1019px;height:1px;background:#c6c6c6"></div>
<svg style="position:absolute;left:20px;top:570px" width="5" height="7" viewBox="0 0 5 7"><path d="M4.5 0.5 L4.5 6.5 L0.5 3.5 Z" fill="#217346"/></svg>
<svg style="position:absolute;left:38px;top:570px" width="5" height="7" viewBox="0 0 5 7"><path d="M0.5 0.5 L0.5 6.5 L4.5 3.5 Z" fill="#bdbdbd"/></svg>
<div style="position:absolute;left:-143.50px;width:400px;text-align:center;top:569.50px;line-height:9.00px;font-size:7.5px;color:#217346;font-weight:700;white-space:nowrap;transform-origin:center center;">...</div>
<div style="position:absolute;left:66.7px;top:565.8px;width:48.3px;height:15.7px;background:#fafafa;border:1px solid #cfcfcf;box-sizing:border-box"></div>
<div style="position:absolute;left:67.7px;top:566.8px;width:46.3px;height:13.7px;background:#00b050"></div>
<div style="position:absolute;left:-109.15px;width:400px;text-align:center;top:569.32px;line-height:9.96px;font-size:8.3px;color:#1f2a1f;font-weight:400;white-space:nowrap;transform-origin:center center;transform:scaleX(0.88);">Planilha2</div>
<div style="position:absolute;left:116px;top:565.8px;width:48.5px;height:15.7px;background:#fafafa;border:1px solid #cfcfcf;box-sizing:border-box"></div>
<div style="position:absolute;left:117px;top:566.8px;width:46.5px;height:13.7px;background:#00b050"></div>
<div style="position:absolute;left:-59.75px;width:400px;text-align:center;top:569.32px;line-height:9.96px;font-size:8.3px;color:#1f2a1f;font-weight:400;white-space:nowrap;transform-origin:center center;transform:scaleX(0.88);">Planilha3</div>
<div style="position:absolute;left:165.4px;top:565.8px;width:52.79999999999998px;height:15.7px;background:#fafafa;border:1px solid #cfcfcf;box-sizing:border-box"></div>
<div style="position:absolute;left:166.4px;top:566.8px;width:50.79999999999998px;height:13.7px;background:#00b0f0"></div>
<div style="position:absolute;left:-8.20px;width:400px;text-align:center;top:569.32px;line-height:9.96px;font-size:8.3px;color:#1f2a3a;font-weight:400;white-space:nowrap;transform-origin:center center;transform:scaleX(0.88);">Planilha10</div>
<div style="position:absolute;left:218.7px;top:565.8px;width:52.80000000000001px;height:15.7px;background:#fafafa;border:1px solid #cfcfcf;box-sizing:border-box"></div>
<div style="position:absolute;left:219.7px;top:566.8px;width:50.80000000000001px;height:13.7px;background:#00b0f0"></div>
<div style="position:absolute;left:45.10px;width:400px;text-align:center;top:569.32px;line-height:9.96px;font-size:8.3px;color:#1f2a3a;font-weight:400;white-space:nowrap;transform-origin:center center;transform:scaleX(0.88);">Planilha11</div>
<div style="position:absolute;left:272.7px;top:565.8px;width:52.30000000000001px;height:15.7px;background:#fafafa;border:1px solid #cfcfcf;box-sizing:border-box"></div>
<div style="position:absolute;left:273.7px;top:566.8px;width:50.30000000000001px;height:13.7px;background:#00b0f0"></div>
<div style="position:absolute;left:98.85px;width:400px;text-align:center;top:569.32px;line-height:9.96px;font-size:8.3px;color:#1f2a3a;font-weight:400;white-space:nowrap;transform-origin:center center;transform:scaleX(0.88);">Planilha12</div>
<div style="position:absolute;left:326.4px;top:565.8px;width:52.80000000000001px;height:15.7px;background:#fafafa;border:1px solid #cfcfcf;box-sizing:border-box"></div>
<div style="position:absolute;left:327.4px;top:566.8px;width:50.80000000000001px;height:13.7px;background:#00b0f0"></div>
<div style="position:absolute;left:152.80px;width:400px;text-align:center;top:569.32px;line-height:9.96px;font-size:8.3px;color:#1f2a3a;font-weight:400;white-space:nowrap;transform-origin:center center;transform:scaleX(0.88);">Planilha13</div>
<div style="position:absolute;left:434.2px;top:565.8px;width:51.80000000000001px;height:15.7px;background:#fafafa;border:1px solid #cfcfcf;box-sizing:border-box"></div>
<div style="position:absolute;left:435.2px;top:566.8px;width:49.80000000000001px;height:13.7px;background:#767171"></div>
<div style="position:absolute;left:260.10px;width:400px;text-align:center;top:569.32px;line-height:9.96px;font-size:8.3px;color:#e8e8e8;font-weight:400;white-space:nowrap;transform-origin:center center;transform:scaleX(0.88);">Planilha16</div>
<div style="position:absolute;left:487px;top:565.8px;width:52.200000000000045px;height:15.7px;background:#fafafa;border:1px solid #cfcfcf;box-sizing:border-box"></div>
<div style="position:absolute;left:488px;top:566.8px;width:50.200000000000045px;height:13.7px;background:#767171"></div>
<div style="position:absolute;left:313.10px;width:400px;text-align:center;top:569.32px;line-height:9.96px;font-size:8.3px;color:#e8e8e8;font-weight:400;white-space:nowrap;transform-origin:center center;transform:scaleX(0.88);">Planilha17</div>
<div style="position:absolute;left:379.5px;top:565.5px;width:53.4px;height:16px;background:#f7f7f7;border-left:1px solid #c6c6c6;border-right:1px solid #c6c6c6;box-sizing:border-box"></div>
<div style="position:absolute;left:380.5px;top:579px;width:51.4px;height:1.6px;background:#217346"></div>
<div style="position:absolute;left:206.20px;width:400px;text-align:center;top:568.84px;line-height:10.32px;font-size:8.6px;color:#217346;font-weight:700;white-space:nowrap;transform-origin:center center;transform:scaleX(0.88);">Planilha15</div>
<svg style="position:absolute;left:559px;top:568px" width="12" height="12" viewBox="0 0 12 12"><circle cx="6" cy="6" r="4.8" fill="none" stroke="#777" stroke-width="1"/><path d="M6 3.2 L6 8.8 M3.2 6 L8.8 6" stroke="#777" stroke-width="1.2"/></svg>
<svg style="position:absolute;left:618px;top:569px" width="3" height="9" viewBox="0 0 3 9"><g fill="#aaa"><rect x="1" y="0" width="1" height="1"/><rect x="1" y="3" width="1" height="1"/><rect x="1" y="6" width="1" height="1"/></g></svg>
<div style="position:absolute;left:629.8px;top:569.5px;width:386px;height:8.3px;background:#dcdcdc"></div>
<div style="position:absolute;left:629.8px;top:569.5px;width:8.3px;height:8.3px;background:#fff;border:1px solid #c6c6c6;box-sizing:border-box"></div>
<svg style="position:absolute;left:631.5px;top:571px" width="5" height="5" viewBox="0 0 5 5"><path d="M3.5 0.5 L3.5 4.5 L1 2.5 Z" fill="#555"/></svg>
<div style="position:absolute;left:638px;top:569.5px;width:73px;height:8.3px;background:#fff;border:1px solid #c6c6c6;box-sizing:border-box"></div>
<div style="position:absolute;left:1007.7px;top:569.5px;width:8.3px;height:8.3px;background:#fff;border:1px solid #c6c6c6;box-sizing:border-box"></div>
<svg style="position:absolute;left:1009.5px;top:571px" width="5" height="5" viewBox="0 0 5 5"><path d="M1.5 0.5 L1.5 4.5 L4 2.5 Z" fill="#555"/></svg>
<div style="position:absolute;left:0px;top:582px;width:1024px;height:15px;background:#f3f3f3"></div>
<div style="position:absolute;left:0px;top:582px;width:1024px;height:1px;background:#dadada"></div>
<div style="position:absolute;left:9.4px;top:586.30px;line-height:8.40px;font-size:7px;color:#444;font-weight:400;white-space:nowrap;transform-origin:left center;">Pronto</div>
<div style="position:absolute;left:40.4px;top:586.30px;line-height:8.40px;font-size:7px;color:#444;font-weight:400;white-space:nowrap;transform-origin:left center;">Calcula</div>
<svg style="position:absolute;left:74px;top:584px" width="11" height="11" viewBox="0 0 11 11"><g fill="none" stroke="#555" stroke-width="0.9"><circle cx="5" cy="5" r="3.5"/><path d="M6 6 L10 10 M10 6 L6 10"/></g></svg>
<div style="position:absolute;left:85.8px;top:586.30px;line-height:8.40px;font-size:7px;color:#444;font-weight:400;white-space:nowrap;transform-origin:left center;">Acessibilidade: investigar</div>
<div style="position:absolute;left:846px;top:583px;width:24px;height:14px;background:#d5d5d5"></div>
<svg style="position:absolute;left:853px;top:585px" width="11" height="10" viewBox="0 0 11 10"><rect x="0.5" y="0.5" width="10" height="9" fill="none" stroke="#888"/><path d="M0.5 3.5 L10.5 3.5 M0.5 6.5 L10.5 6.5 M3.8 0.5 L3.8 9.5 M7.2 0.5 L7.2 9.5" stroke="#888" stroke-width="0.8"/></svg>
<svg style="position:absolute;left:878px;top:585px" width="11" height="10" viewBox="0 0 11 10"><rect x="0.5" y="0.5" width="10" height="9" fill="none" stroke="#999"/><path d="M3.5 0.5 L3.5 9.5 M7.5 0.5 L7.5 9.5" stroke="#aaa" stroke-width="0.8"/></svg>
<svg style="position:absolute;left:901px;top:585px" width="11" height="10" viewBox="0 0 11 10"><rect x="0.5" y="0.5" width="10" height="9" fill="none" stroke="#999"/><path d="M3.5 0.5 L3.5 5.5 L7.5 5.5 L7.5 0.5" fill="none" stroke="#999" stroke-width="0.8"/></svg>
<div style="position:absolute;left:922px;top:589.5px;width:6px;height:1px;background:#555"></div>
<div style="position:absolute;left:931px;top:589.5px;width:60px;height:1px;background:#999"></div>
<div style="position:absolute;left:960.5px;top:585.5px;width:3.5px;height:8px;background:#555"></div>
<div style="position:absolute;left:994px;top:589.5px;width:6px;height:1px;background:#555"></div>
<div style="position:absolute;left:996.5px;top:587px;width:1px;height:6px;background:#555"></div>
<div style="position:absolute;left:1005px;top:586.30px;line-height:8.40px;font-size:7px;color:#444;font-weight:400;white-space:nowrap;transform-origin:left center;">115%</div>
</body></html>
